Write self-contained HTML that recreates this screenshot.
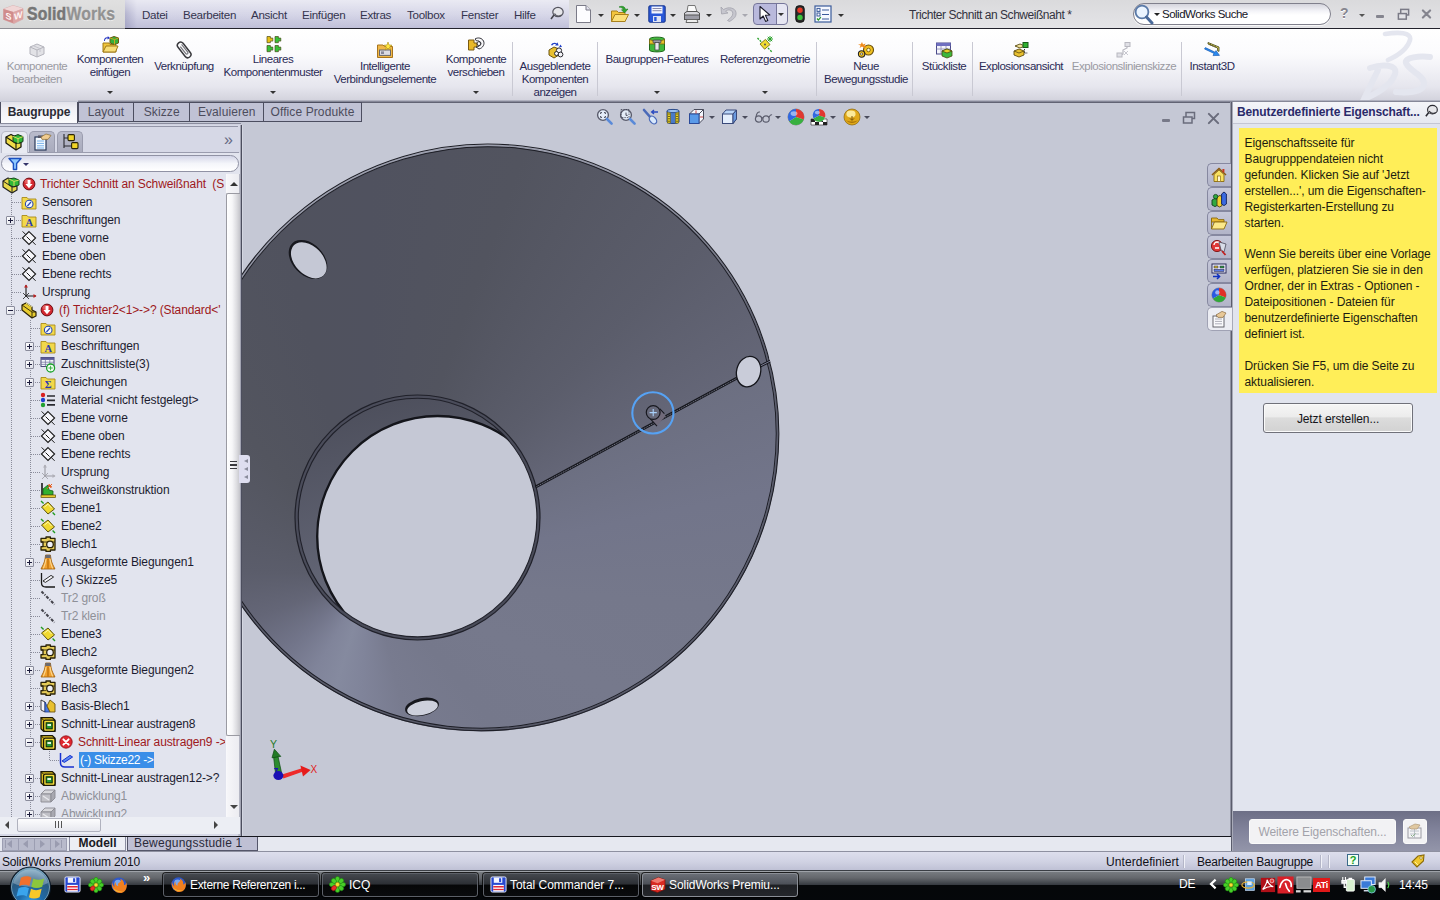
<!DOCTYPE html>
<html lang="de"><head><meta charset="utf-8"><title>SolidWorks Premium 2010 - Trichter Schnitt an Schweißnaht</title>
<style>
*{box-sizing:border-box;margin:0;padding:0}
html,body{width:1440px;height:900px;overflow:hidden;background:#c5c8d5}
body{font-family:"Liberation Sans","DejaVu Sans",sans-serif;font-size:12px;color:#1c1c30;position:relative}
.abs{position:absolute}
#page{position:absolute;left:0;top:0;width:1440px;height:900px;overflow:hidden}
/* title */
#title{left:0;top:0;width:1440px;height:28px;background:linear-gradient(#dadadc,#e0e0e3 60%,#e4e4e7)}
#titleline{left:0;top:28px;width:1440px;height:1px;background:linear-gradient(90deg,#8e8e94 0,#8e8e94 125px,#22222c 125px)}
#logo{left:0;top:0;width:125px;height:28px;background:linear-gradient(#e0e0e0,#d6d6d6)}
#menubar{left:125px;top:0;width:444px;height:28px;background:linear-gradient(90deg,#b0b0cc 0,#d3d3e6 12px,#d6d6e8 100%)}
#menubar:after{content:"";position:absolute;left:0;top:0;right:0;bottom:0;background:linear-gradient(rgba(255,255,255,.5),rgba(255,255,255,.05) 50%,rgba(110,110,160,.2))}
.mi{position:absolute;top:8px;font-size:11.6px;color:#34344e;white-space:nowrap;letter-spacing:-0.3px}
/* toolbar */
#cmd{left:0;top:29px;width:1440px;height:72px;background:linear-gradient(#ffffff 0,#fbfbfd 35%,#e6e6ee 80%,#d2d2dc 100%)}
.cb{position:absolute;text-align:center;font-size:11.5px;line-height:13px;color:#2a2a55;white-space:nowrap;letter-spacing:-0.46px}
.cb.dis{color:#9a9aa2}
.sep{position:absolute;top:42px;width:1px;height:54px;background:#c9c9d3}
.dd{position:absolute;width:0;height:0;border-left:3px solid transparent;border-right:3px solid transparent;border-top:3px solid #444}
/* tabs */
#tabrow{left:0;top:101px;width:1440px;height:24px;background:#c5c8d5}
</style></head><body><div id="page">
<!--TITLE-->
<div id="title" class="abs"></div><div id="logo" class="abs"></div><div id="menubar" class="abs"></div>
<svg class="abs" style="left:2px;top:4px" width="23" height="21" viewBox="0 0 23 21"><path d="M1.5 5 L11 1.5 L21 4.5 L21 15 L12 19.5 L1.5 15.5Z" fill="#e0b8b8" stroke="#d4a4a4" stroke-width=".6"/><path d="M1.5 5 L11.5 8 L21 4.5 L11 1.5Z" fill="#f0d6d6"/><path d="M1.5 5 L11.5 8 V19.2 L1.5 15.5Z" fill="#d08c8c"/><path d="M11.5 8 L21 4.5 V15 L11.5 19.2Z" fill="#dca4a4"/><text x="6.6" y="15.4" font-family="Liberation Sans,sans-serif" font-weight="bold" font-size="9" fill="#fff4f4" text-anchor="middle" transform="skewY(17)" style="transform-origin:6.6px 12px">S</text><text x="16.2" y="14.6" font-family="Liberation Sans,sans-serif" font-weight="bold" font-size="9" fill="#fff4f4" text-anchor="middle" transform="skewY(-20)" style="transform-origin:16.2px 12px">W</text></svg>
<div class="abs" style="left:27px;top:3.6px;font-size:18px;font-weight:bold;color:#767676;letter-spacing:0.2px;text-shadow:0 1px 0 #f0f0f0;white-space:nowrap;transform:scaleX(.875);transform-origin:0 0;-webkit-text-stroke:.5px #767676">Solid<span style="color:#929292;-webkit-text-stroke:.3px #929292">Works</span></div>
<div class="mi" style="left:142px">Datei</div>
<div class="mi" style="left:183px">Bearbeiten</div>
<div class="mi" style="left:251px">Ansicht</div>
<div class="mi" style="left:302px">Einfügen</div>
<div class="mi" style="left:360px">Extras</div>
<div class="mi" style="left:407px">Toolbox</div>
<div class="mi" style="left:461px">Fenster</div>
<div class="mi" style="left:514px">Hilfe</div>
<svg class="abs" style="left:549px;top:6px" width="16" height="16" viewBox="0 0 16 16"><ellipse cx="9" cy="6" rx="5.2" ry="4.6" fill="#e6e6ea" stroke="#55555f" stroke-width="1.2"/><path d="M5 9 L2 13" stroke="#44444c" stroke-width="1.6"/><path d="M5.5 7.5 C7 10 10 10.5 12.5 9" fill="none" stroke="#55555f" stroke-width="1.2"/></svg>
<svg class="abs" style="left:575px;top:4px" width="17" height="20" viewBox="0 0 17 20"><path d="M1.5 1.5 H11 L15.5 6 V18.5 H1.5Z" fill="#fdfdff" stroke="#7b7b88"/><path d="M11 1.5 V6 H15.5" fill="#e4e4ee" stroke="#7b7b88"/></svg>
<div class="dd" style="left:598px;top:14px;border-top-color:#333"></div>
<svg class="abs" style="left:610px;top:4px" width="20" height="20" viewBox="0 0 20 20"><path d="M1.5 7 H7 L8.5 8.5 H15 V17.5 H1.5Z" fill="#f3c53c" stroke="#a8801c"/><path d="M1.5 17.5 L5 10.5 H18.5 L15 17.5Z" fill="#fbe07a" stroke="#a8801c"/><path d="M9 3 C12 1.5 15 2.5 15.5 5.5 L18 5 L14.5 9 L11.5 5.8 L13.6 5.6 C13 4 11 3.4 9 3Z" fill="#2fa62f" stroke="#1a7a1a" stroke-width=".6"/></svg>
<div class="dd" style="left:634px;top:14px;border-top-color:#333"></div>
<svg class="abs" style="left:648px;top:5px" width="18" height="18" viewBox="0 0 18 18"><rect x=".8" y=".8" width="16.4" height="16.4" rx="1.2" fill="#2a58d8" stroke="#16348c"/><rect x="3.5" y="1.5" width="11" height="7" fill="#f4f6ff"/><rect x="4.5" y="3" width="9" height="1" fill="#88a"/><rect x="4.5" y="5.2" width="9" height="1" fill="#88a"/><rect x="5" y="11" width="8" height="6" fill="#dfe4f4"/><rect x="6.2" y="12" width="2.4" height="4" fill="#2a58d8"/></svg>
<div class="dd" style="left:670px;top:14px;border-top-color:#333"></div>
<svg class="abs" style="left:683px;top:4px" width="18" height="20" viewBox="0 0 18 20"><path d="M5 1.5 H12 L14 8 H4Z" fill="#fafafa" stroke="#777"/><path d="M1.5 9 L4 7.5 H14 L16.5 9 V14.5 H1.5Z" fill="#d6d6dc" stroke="#555"/><rect x="1.5" y="11" width="15" height="4.5" fill="#9c9ca6" stroke="#555"/><path d="M4 15.5 L3 18.5 H15 L14 15.5Z" fill="#eee" stroke="#666"/></svg>
<div class="dd" style="left:706px;top:14px;border-top-color:#333"></div>
<svg class="abs" style="left:719px;top:5px" width="19" height="18" viewBox="0 0 19 18"><path d="M2 2 L2.6 9 L9 8 L6.6 6.3 C9 4 13.5 4.5 13.8 8.2 C14 11 11.5 13 8.5 15.5 L10.5 16.5 C15 14 17.5 11.5 17 7.6 C16.4 2.6 9 1.4 4.6 4.6Z" fill="#c6c6ce" stroke="#a2a2ac" stroke-width=".8"/></svg>
<div class="dd" style="left:742px;top:14px;border-top-color:#a8a8b0"></div>
<div class="abs" style="left:753px;top:3px;width:35px;height:22px;border:1px solid #76769a;border-radius:4px;background:linear-gradient(90deg,#b9b9dc 0,#b9b9dc 22px,#76769a 22px,#76769a 23px,#e6e6f2 23px)"></div>
<svg class="abs" style="left:758px;top:5px" width="14" height="18" viewBox="0 0 14 18"><path d="M2 1.5 V14 L5.2 11 L7.6 16.4 L9.8 15.4 L7.4 10.2 L11.8 10Z" fill="#fff" stroke="#1a1a2a" stroke-width="1.1" stroke-linejoin="round"/></svg>
<div class="dd" style="left:778px;top:13px;border-top-color:#333"></div>
<svg class="abs" style="left:795px;top:5px" width="10" height="18" viewBox="0 0 10 18"><rect x=".8" y=".8" width="8.4" height="16.4" rx="3" fill="#2c2c2c" stroke="#111"/><circle cx="5" cy="5.2" r="2.7" fill="#e83a28"/><circle cx="5" cy="12.4" r="2.7" fill="#3cc43c"/></svg>
<svg class="abs" style="left:814px;top:5px" width="18" height="18" viewBox="0 0 18 18"><rect x="1" y="1" width="16" height="16" fill="#f6f8ff" stroke="#3a5a9a" stroke-width="1.2"/><rect x="3" y="3.4" width="3" height="3" fill="none" stroke="#3a5a9a"/><rect x="3" y="8" width="3" height="3" fill="none" stroke="#3a5a9a"/><path d="M3 13.5 l1.4 1.6 l2.4-3" stroke="#2a9a2a" fill="none" stroke-width="1.3"/><path d="M8 5 H15 M8 9.5 H15 M8 14 H15" stroke="#3a5a9a" stroke-width="1.2"/></svg>
<div class="dd" style="left:838px;top:14px;border-top-color:#333"></div>
<div class="abs" style="left:909px;top:8px;font-size:12px;color:#333340;white-space:nowrap;letter-spacing:-0.46px">Trichter Schnitt an Schweißnaht *</div>
<div class="abs" style="left:1133px;top:3px;width:198px;height:22px;border:1px solid #80808c;border-radius:11px;background:linear-gradient(#d4d4dc,#f4f4f8 35%,#ffffff 55%);box-shadow:0 1px 0 #f8f8f8"></div>
<svg class="abs" style="left:1133px;top:3px" width="22" height="22" viewBox="0 0 22 22"><circle cx="9" cy="9" r="6.4" fill="#eaf4ff" stroke="#5a7aa8" stroke-width="1.8"/><path d="M13.5 14 L19 20" stroke="#4a6a9a" stroke-width="3" stroke-linecap="round"/></svg>
<div class="dd" style="left:1154px;top:13px;border-top-color:#222"></div>
<div class="abs" style="left:1162px;top:8px;font-size:11.5px;color:#15151f;white-space:nowrap;letter-spacing:-0.5px">SolidWorks Suche</div>
<div class="abs" style="left:1340px;top:5px;font-size:14px;font-weight:bold;color:#85858f;text-shadow:0 1px 0 #fff">?</div>
<div class="dd" style="left:1359px;top:14px;border-top-color:#555"></div>
<div class="abs" style="left:1376px;top:15px;width:8px;height:3px;background:#85858f;border-radius:1px"></div>
<svg class="abs" style="left:1397px;top:8px" width="13" height="13" viewBox="0 0 14 14"><rect x="4" y="1.5" width="8.5" height="6" fill="none" stroke="#7a7a86" stroke-width="1.6"/><rect x="1.5" y="6" width="8.5" height="6" fill="#e4e4e8" stroke="#7a7a86" stroke-width="1.6"/></svg>
<svg class="abs" style="left:1421px;top:9px" width="11" height="10" viewBox="0 0 14 14"><path d="M2 2 L12 12 M12 2 L2 12" stroke="#85858f" stroke-width="3" stroke-linecap="round"/></svg>
<div id="titleline" class="abs"></div>
<!--/TITLE-->
<!--CMD-->
<div id="cmd" class="abs"></div>
<svg class="abs" style="left:1352px;top:30px" width="88" height="71" viewBox="1352 30 88 71"><g fill="none" stroke="#e4e6ef" stroke-linecap="round"><path d="M1385 34 C1398 32 1412 32 1410 40 C1407 50 1397 56 1388 60" stroke-width="4.6"/><path d="M1370 68 C1382 64 1398 64 1395 74 C1391 86 1376 94 1364 99 L1378 70" stroke-width="6"/><path d="M1430 57 C1420 56 1404 57 1406 63 C1410 72 1426 76 1424 85 C1422 92 1408 93 1396 92" stroke-width="6"/></g></svg>
<div class="cb dis" style="left:-43px;width:160px;top:60px">Komponente</div>
<div class="cb dis" style="left:-43px;width:160px;top:73px">bearbeiten</div>
<svg class="abs" style="left:28px;top:41px" width="18" height="18" viewBox="0 0 18 18"><path d="M2 6 L9 3 L16 6 V13 L9 16 L2 13Z" fill="#e2e2e6" stroke="#b4b4bc"/><path d="M2 6 L9 9 L16 6 M9 9 V16" fill="none" stroke="#b4b4bc"/><path d="M5 4.6 L12 7.6 V11" fill="none" stroke="#c4c4cc"/></svg>
<div class="cb" style="left:30px;width:160px;top:53px">Komponenten</div>
<div class="cb" style="left:30px;width:160px;top:66px">einfügen</div>
<div class="dd" style="left:107px;top:91px;border-top-color:#333"></div>
<svg class="abs" style="left:101px;top:35px" width="18" height="18" viewBox="0 0 18 18"><path d="M2 8 H8 L9 9.5 H15 V17 H2Z" fill="#f0c43a" stroke="#a07a18"/><path d="M2 17 L5 11 H17 L14.5 17Z" fill="#f8de78" stroke="#a07a18"/><path d="M9 3 L13 1.5 L17.5 3 V8 L13.5 9.5 L9 8Z" fill="#37b03a" stroke="#6a5a10"/><path d="M9 3 L13.5 4.6 L17.5 3 M13.5 4.6 V9.5" stroke="#c8a820" fill="none"/><path d="M3 6 C3 3 5 2 7 2.4 L6.6 1 L9 3 L6.4 4.6 L6.6 3.4 C5 3.2 4 4 4 6Z" fill="#2030c0"/></svg>
<div class="cb" style="left:104px;width:160px;top:60px">Verknüpfung</div>
<svg class="abs" style="left:175px;top:41px" width="18" height="18" viewBox="0 0 18 18"><g transform="rotate(-38 9 9)"><rect x="6" y="0" width="6.4" height="18" rx="3.2" fill="none" stroke="#3a3a3e" stroke-width="1.5"/><path d="M8.2 4 V13 a1.2 1.2 0 0 0 2.4 0 V3" fill="none" stroke="#77777d" stroke-width="1.2"/></g></svg>
<div class="cb" style="left:193px;width:160px;top:53px">Lineares</div>
<div class="cb" style="left:193px;width:160px;top:66px">Komponentenmuster</div>
<div class="dd" style="left:270px;top:91px;border-top-color:#333"></div>
<svg class="abs" style="left:264px;top:35px" width="18" height="18" viewBox="0 0 18 18"><g stroke="#4a4a18" stroke-width=".7"><path d="M3 1.5 h3.4 v1.6 h2.4 v3 h-2.4 v1.6 h-3.4z" fill="#e8c018"/><path d="M11 1.5 h3.4 v1.6 h2.4 v3 h-2.4 v1.6 h-3.4z" fill="#38c038"/><path d="M3 10.5 h3.4 v1.6 h2.4 v3 h-2.4 v1.6 h-3.4z" fill="#38c038"/><path d="M11 10.5 h3.4 v1.6 h2.4 v3 h-2.4 v1.6 h-3.4z" fill="#38c038"/></g></svg>
<div class="cb" style="left:305px;width:160px;top:60px">Intelligente</div>
<div class="cb" style="left:305px;width:160px;top:73px">Verbindungselemente</div>
<svg class="abs" style="left:376px;top:41px" width="18" height="18" viewBox="0 0 18 18"><path d="M1.5 4 H7 L8.5 5.5 H16.5 V16.5 H1.5Z" fill="#f0b848" stroke="#a8741c"/><rect x="3.5" y="9" width="11" height="5.4" fill="#dcdce4" stroke="#66666e"/><rect x="5" y="10.4" width="3" height="2.6" fill="#88889a"/><path d="M12 1 L13 4 L16 4.2 L13.6 6 L14.6 9 L12 7.2 L9.4 9 L10.4 6 L8 4.2 L11 4Z" fill="#ffe640" stroke="#a88a10" stroke-width=".6"/></svg>
<div class="cb" style="left:396px;width:160px;top:53px">Komponente</div>
<div class="cb" style="left:396px;width:160px;top:66px">verschieben</div>
<div class="dd" style="left:473px;top:91px;border-top-color:#333"></div>
<svg class="abs" style="left:467px;top:35px" width="18" height="18" viewBox="0 0 18 18"><path d="M1.5 5 H7 V8 H10 V12 H7 V15 H1.5Z" fill="#e8b828" stroke="#7a5a10"/><path d="M8 4 C11 2 15 3 16.5 6 C18 9 16 13 12 14 L9 12 C12 12 14 10 13.4 8 C13 6 11 5.4 9.6 6Z" fill="#f8f8fa" stroke="#33333a" stroke-width="1"/><circle cx="12" cy="8.6" r="2" fill="none" stroke="#33333a" stroke-width=".9"/></svg>
<div class="cb" style="left:475px;width:160px;top:60px">Ausgeblendete</div>
<div class="cb" style="left:475px;width:160px;top:73px">Komponenten</div>
<div class="cb" style="left:475px;width:160px;top:86px">anzeigen</div>
<svg class="abs" style="left:546px;top:41px" width="18" height="18" viewBox="0 0 18 18"><path d="M3 9 L8 6 L13 8 L13 14 L8 17 L3 14Z" fill="#e8c030" stroke="#6a5410"/><circle cx="13" cy="9.5" r="2.6" fill="#f4f4f8" stroke="#2a2a30"/><circle cx="14.5" cy="13.5" r="2.4" fill="#f4f4f8" stroke="#2a2a30"/><circle cx="10.5" cy="12.5" r="2" fill="#f4f4f8" stroke="#2a2a30"/><path d="M5 4 C6 1.6 9 1 11 2.4 L11.6 1.2 L12.6 4.6 L9 4.6 L10 3.4 C8.6 2.6 7 3 6.2 4.6Z" fill="#2040c8"/><path d="M14.5 3.5 l1.5 2.5 l-3 .2z" fill="#2040c8"/></svg>
<div class="cb" style="left:577px;width:160px;top:53px">Baugruppen-Features</div>
<div class="dd" style="left:654px;top:91px;border-top-color:#333"></div>
<svg class="abs" style="left:648px;top:35px" width="18" height="18" viewBox="0 0 18 18"><path d="M1.5 4 C1.5 1.5 16.5 1.5 16.5 4 V15 C16.5 17.5 1.5 17.5 1.5 15Z" fill="#42b83c" stroke="#1e6a1c"/><path d="M1.5 4 C1.5 6.4 16.5 6.4 16.5 4 V9 H1.5Z" fill="#e6c22a" stroke="#7a6410" stroke-width=".8"/><rect x="5" y="5" width="8" height="3" rx="1" fill="#9a9aa2" stroke="#3a3a40" stroke-width=".7"/><rect x="7" y="7.6" width="4" height="7.4" fill="#e8e8ee" stroke="#3a3a40" stroke-width=".7"/></svg>
<div class="cb" style="left:685px;width:160px;top:53px">Referenzgeometrie</div>
<div class="dd" style="left:762px;top:91px;border-top-color:#333"></div>
<svg class="abs" style="left:756px;top:35px" width="18" height="18" viewBox="0 0 18 18"><path d="M4 9 L9.5 4.4 L14 9.6 L8.6 14.2Z" fill="#f0dc30" stroke="#7a7210" stroke-width=".9"/><path d="M1.5 3 L5.4 7 M12 13 L16 17" stroke="#28a028" stroke-width="1.3" stroke-dasharray="2 1.2"/><path d="M14 1 V7 M11 4 H17 M11.8 1.8 L16.2 6.2 M16.2 1.8 L11.8 6.2" stroke="#28a028" stroke-width="1"/><circle cx="9" cy="9.4" r="1" fill="#555"/></svg>
<div class="cb" style="left:786px;width:160px;top:60px">Neue</div>
<div class="cb" style="left:786px;width:160px;top:73px">Bewegungsstudie</div>
<svg class="abs" style="left:857px;top:41px" width="18" height="18" viewBox="0 0 18 18"><circle cx="11.5" cy="9" r="5" fill="#f0c020" stroke="#6a4e08" stroke-width="1.1"/><circle cx="11.5" cy="9" r="1.8" fill="#fff8d0" stroke="#6a4e08" stroke-width=".8"/><circle cx="4.6" cy="13" r="3.2" fill="#f0c020" stroke="#222" stroke-width="1.1"/><circle cx="4.6" cy="13" r="1.1" fill="#fff" stroke="#222" stroke-width=".6"/><path d="M5 1 L6 3.6 L8.6 2.4 L7.4 5 L10 6 L7.4 7 L5 5.4 L2.6 7 L3.6 4.4 L1 3.4 L3.8 3.2Z" fill="#f08a1a"/></svg>
<div class="cb" style="left:864px;width:160px;top:60px">Stückliste</div>
<svg class="abs" style="left:935px;top:41px" width="18" height="18" viewBox="0 0 18 18"><rect x="1.5" y="2" width="14" height="11" fill="#f4f4fa" stroke="#4a4a8a"/><rect x="1.5" y="2" width="14" height="3" fill="#7070c0"/><path d="M1.5 8 H15.5 M6 5 V13 M11 5 V13" stroke="#8a8ab0" stroke-width=".8"/><path d="M7 10 L12 8 L17 10 V15 L12 17 L7 15Z" fill="#3cb83c" stroke="#4a4a10" stroke-width=".8"/><path d="M7 10 L12 12 L17 10 L12 8Z" fill="#e8d028" stroke="#4a4a10" stroke-width=".8"/></svg>
<div class="cb" style="left:941px;width:160px;top:60px">Explosionsansicht</div>
<svg class="abs" style="left:1012px;top:41px" width="18" height="18" viewBox="0 0 18 18"><path d="M2 10 L7 8 L12 10 V14 L7 16 L2 14Z" fill="#e8c030" stroke="#5a4a10" stroke-width=".9"/><path d="M2 10 L7 12 L12 10" fill="none" stroke="#5a4a10" stroke-width=".8"/><path d="M3 5 L8 3 L13 5 L8 7Z" fill="#f4e6a0" stroke="#5a4a10" stroke-width=".9"/><rect x="11" y="1.5" width="5" height="5" fill="#30b030" stroke="#185a18"/><path d="M12.5 8 V12 H16" stroke="#333" fill="none" stroke-dasharray="1.4 1"/></svg>
<div class="cb dis" style="left:1044px;width:160px;top:60px">Explosionslinienskizze</div>
<svg class="abs" style="left:1115px;top:41px" width="18" height="18" viewBox="0 0 18 18"><path d="M3 15 L8 13 L8 9 L12 7 L12 3" fill="none" stroke="#b8b8c0" stroke-width="1.2"/><rect x="10" y="1.5" width="5" height="4" fill="#e0e0e6" stroke="#b8b8c0"/><rect x="2" y="12" width="5" height="4" fill="#e0e0e6" stroke="#b8b8c0"/><path d="M9 10 l4 4 m0-4 l-4 4" stroke="#c8c8d0"/></svg>
<div class="cb" style="left:1132px;width:160px;top:60px">Instant3D</div>
<svg class="abs" style="left:1203px;top:41px" width="18" height="18" viewBox="0 0 18 18"><path d="M5 1.5 L16 6 L16 10.4 L14.6 9.8 L14.6 7 L5 3Z" fill="#f4e860" stroke="#3a3a10" stroke-width=".8"/><path d="M7.4 3 v1.4 M9.8 4 v1.4 M12.2 5 v1.4" stroke="#3a3a10" stroke-width=".7"/><path d="M1.5 8 L11 12.4 L10 14.6 L16.5 14.4 L13 9.6 L12.2 11.2 L2.4 6.6Z" fill="#2a8af0" stroke="#1050a8" stroke-width=".6"/></svg>
<div class="sep" style="left:512px"></div>
<div class="sep" style="left:597px"></div>
<div class="sep" style="left:816px"></div>
<div class="sep" style="left:912px"></div>
<div class="sep" style="left:972px"></div>
<div class="sep" style="left:1181px"></div>
<!--/CMD-->
<!--VIEW-->
<div class="abs" style="left:242px;top:102px;width:989px;height:734px;background:#c5c8d5;overflow:hidden"><div class="abs" style="left:0;top:23px;width:1px;height:711px;background:#d3d6e1"></div>
<div class="abs" style="left:-53.0px;top:43.5px;width:591.2px;height:583.8px;border-radius:50%;transform:rotate(-38deg);overflow:hidden"><div class="abs" style="left:-24.4px;top:-28.1px;width:640px;height:640px;transform:rotate(38deg);background:linear-gradient(165deg,#a0a3b2 10%,#8c8f9e 28%,#5e606f 46%,#555766 100%)"></div></div>
<div class="abs" style="left:-50.4px;top:46.1px;width:586.0px;height:578.6px;border-radius:50%;transform:rotate(-38deg);overflow:hidden"><div class="abs" style="left:-27.0px;top:-30.7px;width:640px;height:640px;transform:rotate(38deg);background:conic-gradient(from 0deg at 204.9px 458.6px,#50525f 0deg,#52545f 20deg,#5b5d6b 45deg,#646677 61.4deg,#6c6f81 61.6deg,#72758a 78deg,#75788b 95deg,#76798c 115deg,#75788b 140deg,#787b8f 166deg,#80849a 184deg,#858a9f 197deg,#80849a 210deg,#72758a 228deg,#646677 250deg,#5b5d6b 272deg,#53555f 319deg,#50525e 346deg,#50525f 360deg)"></div></div>
</div>
<svg class="abs" style="left:242px;top:102px" width="989" height="734" viewBox="242 102 989 734">
<defs>
<linearGradient id="gneck" gradientUnits="userSpaceOnUse" x1="300" y1="420" x2="360" y2="640"><stop offset="0" stop-color="#4d4f5c"/><stop offset="1" stop-color="#6a6d7e"/></linearGradient>
</defs>
<ellipse cx="484.6" cy="437.4" rx="295.6" ry="291.9" transform="rotate(-38 484.6 437.4)" fill="none" stroke="#1d1e26" stroke-width="1.1"/>
<ellipse cx="484.6" cy="437.4" rx="293" ry="289.3" transform="rotate(-38 484.6 437.4)" fill="none" stroke="#1d1e26" stroke-width="1"/>
<circle cx="417.5" cy="517.5" r="122.5" fill="#4a4c5a" stroke="#20212a" stroke-width="1.2"/>
<circle cx="417.6" cy="517.6" r="119.3" fill="url(#gneck)"/>
<clipPath id="cnear"><circle cx="417.6" cy="517.6" r="119.3"/></clipPath>
<circle cx="437.6" cy="536.4" r="120.4" fill="#c5c8d5" stroke="#14151b" stroke-width="2.4" clip-path="url(#cnear)"/>
<circle cx="417.6" cy="517.6" r="119.3" fill="none" stroke="#20212a" stroke-width="1.1"/>
<path d="M535.5 487 L737 378" stroke="#15161c" stroke-width="3.1"/>
<path d="M536.5 486.6 L737 378.2" stroke="#7c7f92" stroke-width=".9" stroke-dasharray="1.2 .8"/>
<path d="M759.5 366.4 L770.5 361" stroke="#15161c" stroke-width="2.8"/><path d="M760 366.2 L770 361.2" stroke="#8588a0" stroke-width=".9"/>
<path d="M770 358 L772 364" stroke="#c5c8d5" stroke-width="1.6"/>
<ellipse cx="308" cy="259.5" rx="22.6" ry="15.6" transform="rotate(46 308 259.5)" fill="#17181e"/>
<ellipse cx="308.8" cy="260.3" rx="21.2" ry="14" transform="rotate(46 308.8 260.3)" fill="#c5c8d5"/>
<ellipse cx="748.6" cy="371.6" rx="12" ry="15.4" transform="rotate(14 748.6 371.6)" fill="#c9ccd9" stroke="#15161c" stroke-width="1.3"/>
<ellipse cx="422" cy="706.9" rx="17.2" ry="8.9" transform="rotate(-12 422 706.9)" fill="#17181e"/>
<ellipse cx="422.5" cy="708" rx="15.6" ry="7" transform="rotate(-12 422.5 708)" fill="#cdd0dc"/>
<path d="M650.6 418.6 L657 426 L665.6 416 L659.4 408.6Z" fill="#706a7a"/>
<path d="M650.4 418.8 L657 426.2 M659.6 408.6 L664.4 413.6" stroke="#17181f" stroke-width="1.1" fill="none"/>
<circle cx="652.9" cy="412.9" r="20.6" fill="none" stroke="#56a2f4" stroke-width="2.1"/>
<circle cx="653.2" cy="412.5" r="6.9" fill="#666879" stroke="#17181f" stroke-width="1.2"/>
<path d="M649.6 412.6 H656.8 M653.2 409 V416.2" stroke="#a8d0fa" stroke-width="1.1"/>
<g><path d="M282 774.4 L302 768.2 L303.2 771.6 L283.4 778.6Z" fill="#ee2a2a"/><path d="M300.4 765.4 L310.6 770 L303 776.6Z" fill="#e61c1c"/><path d="M275.6 774 L273.6 757 L278 756.4 L281.6 773Z" fill="#2c8c2e" stroke="#0c4a10" stroke-width=".7"/><path d="M272 757.8 L274.4 749.2 L280.8 756.4Z" fill="#237a26" stroke="#0c4a10" stroke-width=".7"/><ellipse cx="278.4" cy="775.6" rx="5" ry="4.5" fill="#1a10b4"/><path d="M274.2 768.6 H277.4 L276 772" stroke="#1a10b4" stroke-width="1.2" fill="none"/><text x="310.6" y="773" font-family="Liberation Sans,sans-serif" font-size="10" fill="#e02020">X</text><text x="270" y="748" font-family="Liberation Sans,sans-serif" font-size="10.5" fill="#1f7a28">Y</text></g>
</svg>
<!--/VIEW-->
<!--TABS-->
<div class="abs" style="left:78px;top:100px;width:1362px;height:3px;background:linear-gradient(#c4c5d2,#8e90a0 45%,#5c5e6e 75%,#6e7080)"></div>
<div class="abs" style="left:78px;top:103px;width:1153px;height:21px;background:#c5c8d5"></div>
<div class="abs" style="left:0;top:101.5px;width:78px;height:22px;background:linear-gradient(#e2e2ea,#f0f0f5 30%,#fbfbfd);border-right:1.5px solid #4c4e60;border-bottom:1.5px solid #4c4e60;border-left:1.5px solid #4c4e60"></div>
<div class="abs" style="left:0px;top:105px;width:78px;text-align:center;font-size:12px;font-weight:bold;color:#2a2a34;letter-spacing:-0.1px">Baugruppe</div>
<div class="abs" style="left:77.5px;top:101.5px;width:57.0px;height:20.5px;background:#c0c2d5;border:1.5px solid #4c4e60"></div>
<div class="abs" style="left:77.5px;top:105px;width:57.0px;text-align:center;font-size:12px;color:#4c4c5c;white-space:nowrap;letter-spacing:0.1px">Layout</div>
<div class="abs" style="left:133px;top:101.5px;width:57.5px;height:20.5px;background:#c0c2d5;border:1.5px solid #4c4e60"></div>
<div class="abs" style="left:133px;top:105px;width:57.5px;text-align:center;font-size:12px;color:#4c4c5c;white-space:nowrap;letter-spacing:0.1px">Skizze</div>
<div class="abs" style="left:189px;top:101.5px;width:75.5px;height:20.5px;background:#c0c2d5;border:1.5px solid #4c4e60"></div>
<div class="abs" style="left:189px;top:105px;width:75.5px;text-align:center;font-size:12px;color:#4c4c5c;white-space:nowrap;letter-spacing:0.1px">Evaluieren</div>
<div class="abs" style="left:263px;top:101.5px;width:99px;height:20.5px;background:#c0c2d5;border:1.5px solid #4c4e60"></div>
<div class="abs" style="left:263px;top:105px;width:99px;text-align:center;font-size:12px;color:#4c4c5c;white-space:nowrap;letter-spacing:0.1px">Office Produkte</div>
<!--/TABS-->
<!--LEFT-->
<div class="abs" style="left:0;top:123px;width:241px;height:1px;background:#8a8c9e"></div><div class="abs" style="left:0;top:124px;width:241px;height:1px;background:#d0d2e0"></div>
<div class="abs" style="left:0;top:125px;width:240px;height:711px;background:#d6d8e6"></div><div class="abs" style="left:238px;top:153px;width:3px;height:683px;background:linear-gradient(90deg,#c4c6d2,#a6a8b6)"></div>
<div class="abs" style="left:0;top:126px;width:238px;height:1px;background:#9496a8"></div>
<div class="abs" style="left:240px;top:125px;width:1px;height:711px;background:#a2a4b2"></div><div class="abs" style="left:241px;top:125px;width:1px;height:711px;background:#4c4e5e"></div>
<div class="abs" style="left:1px;top:131px;width:27px;height:22px;background:#e8eaf2;border:1px solid #b8bac8;border-bottom:none;border-radius:5px 5px 0 0"></div>
<div class="abs" style="left:29px;top:131px;width:26px;height:21px;background:linear-gradient(#b9bbcb,#a9abbd);border:1px solid #9a9cae;border-bottom:none;border-radius:5px 5px 0 0"></div>
<div class="abs" style="left:57px;top:131px;width:26px;height:21px;background:linear-gradient(#b9bbcb,#a9abbd);border:1px solid #9a9cae;border-bottom:none;border-radius:5px 5px 0 0"></div>
<div class="abs" style="left:28px;top:152px;width:211px;height:1px;background:#9a9cae"></div>
<div class="abs" style="left:0;top:153px;width:240px;height:21px;background:#e2e4ee"></div>
<div class="abs" style="left:224px;top:131px;font-size:16px;color:#666a84;letter-spacing:-2px;line-height:18px">»</div>
<div class="abs" style="left:1px;top:155px;width:238px;height:17px;border:1px solid #9092a4;border-radius:9px;background:linear-gradient(#d4d6e8,#f4f5fa 50%,#ffffff)"></div>
<svg class="abs" style="left:8px;top:157px" width="14" height="14" viewBox="0 0 14 14"><path d="M1 1.5 H13 L8.6 6.5 V12.5 H5.4 V6.5Z" fill="#8ec8ff" stroke="#1a50c0" stroke-width="1.4" stroke-linejoin="round"/></svg>
<div class="dd" style="left:23px;top:163px;border-top-color:#34346a"></div>
<div class="abs" style="left:0;top:174px;width:227px;height:643px;background:#e2e4ee"></div>
<div class="abs" style="left:226px;top:174px;width:13px;height:643px;background:linear-gradient(90deg,#f6f6f9,#ececf1);border-left:1px solid #f8f8fb"></div>
<div class="abs" style="left:226px;top:193px;width:14px;height:542.5px;background:linear-gradient(90deg,#ffffff 0,#f6f6f8 40%,#dcdce0 75%,#c4c4ca 100%);border:1px solid #9a9aa2;border-right:none;border-radius:2px 0 0 2px"></div>
<div class="abs" style="left:230px;top:182px;width:0;height:0;border-left:4px solid transparent;border-right:4px solid transparent;border-bottom:4px solid #333"></div>
<div class="abs" style="left:230px;top:805px;width:0;height:0;border-left:4px solid transparent;border-right:4px solid transparent;border-top:4px solid #444"></div>
<div class="abs" style="left:0;top:817px;width:240px;height:17px;background:#eceef4"></div>
<div class="abs" style="left:17px;top:818px;width:84px;height:14px;background:linear-gradient(#fdfdfe,#e6e7ee);border:1px solid #b0b2be;border-radius:2px"></div>
<div class="abs" style="left:55px;top:821px;width:7px;height:7px;background:repeating-linear-gradient(90deg,#555 0,#555 1px,transparent 1px,transparent 3px)"></div>
<div class="abs" style="left:5px;top:821px;width:0;height:0;border-top:4px solid transparent;border-bottom:4px solid transparent;border-right:4px solid #444"></div>
<div class="abs" style="left:214px;top:821px;width:0;height:0;border-top:4px solid transparent;border-bottom:4px solid transparent;border-left:4px solid #444"></div>
<svg class="abs" style="left:5px;top:133px" width="20" height="18" viewBox="0 0 20 18"><path d="M1 4 L6 1.5 L11 4 L11 7 L16 9.4 V14 L11 17 L1 10Z" fill="#f0dc48" stroke="#1a1a10" stroke-width="1.3" stroke-linejoin="round"/><path d="M1 4 L11 10.6 V17 M11 10.6 L16 9.4" stroke="#1a1a10" fill="none" stroke-width="1.1"/><path d="M8 3.4 L13 1.6 L18 3.6 V8.6 L13 10.6 L8 8.6Z" fill="#30b838" stroke="#143a14" stroke-width="1"/><path d="M8 3.4 L13 5.6 L18 3.6 M13 5.6 V10.6" stroke="#e8e060" fill="none" stroke-width=".9"/></svg>
<svg class="abs" style="left:33px;top:133px" width="20" height="18" viewBox="0 0 20 18"><rect x="2" y="4" width="11" height="13" fill="#f4faff" stroke="#2a3a5a" stroke-width="1.2"/><path d="M4 8 H11 M4 10.4 H11 M4 12.8 H11 M4 15 H11" stroke="#6aa8e8" stroke-width=".9"/><rect x="5" y="2.4" width="5" height="2.6" fill="#5a5a6a"/><path d="M8 4 L13 1 L18 2.4 L15 6.4 L9 6.4Z" fill="#f0cc90" stroke="#8a6a30" stroke-width=".7"/></svg>
<svg class="abs" style="left:61px;top:133px" width="20" height="18" viewBox="0 0 20 18"><path d="M3 1 V15 M3 5 H8 M3 13 H11" stroke="#2a2a30" stroke-width="1.1" fill="none"/><rect x="7" y="1.6" width="6.4" height="6" rx="1" fill="#f0d428" stroke="#2a2408" stroke-width="1.1"/><rect x="10.6" y="9.6" width="6.4" height="6" rx="1" fill="#f0d428" stroke="#2a2408" stroke-width="1.1"/></svg>
<!--/LEFT-->
<!--TREE-->
<div class="abs" id="tree" style="left:0;top:174px;width:225px;height:643px;overflow:hidden">
<div class="abs" style="left:11px;top:19px;width:1px;height:630px;background:repeating-linear-gradient(0deg,#8a8c9a 0,#8a8c9a 1px,transparent 1px,transparent 2px)"></div>
<div class="abs" style="left:30px;top:145px;width:1px;height:500px;background:repeating-linear-gradient(0deg,#8a8c9a 0,#8a8c9a 1px,transparent 1px,transparent 2px)"></div>
<div class="abs" style="left:49px;top:577px;width:1px;height:9px;background:repeating-linear-gradient(0deg,#8a8c9a 0,#8a8c9a 1px,transparent 1px,transparent 2px)"></div>
<svg class="abs" style="left:2px;top:2px" width="18" height="16" viewBox="0 0 18 16" overflow="visible"><path d="M1 5 L6 2 L11 4 L11 8 L15 10 V14 L10 17 L1 11Z" fill="#e8d84a" stroke="#222" stroke-width="1.2" stroke-linejoin="round"/><path d="M7 3 L12 2 L17 4 V9 L12 11 L7 9Z" fill="#30b838" stroke="#1a4a1a" stroke-width="1"/><path d="M7 3 L12 5.4 L17 4 M12 5.4 V11" stroke="#e8e060" fill="none" stroke-width=".9"/><path d="M1 5 L10 11 V17 M10 11 L15 10" stroke="#222" fill="none" stroke-width="1"/></svg>
<svg class="abs" style="left:22px;top:2px" width="16" height="16" viewBox="0 0 16 16" overflow="visible"><circle cx="7" cy="8" r="5.9" fill="#d42830" stroke="#6e0c12" stroke-width="1"/><ellipse cx="6" cy="5.4" rx="3.4" ry="2.4" fill="#f08080" opacity=".6"/><path d="M5.6 4 H8.4 V8 H10.6 L7 12.2 L3.4 8 H5.6Z" fill="#fff"/></svg>
<div class="abs" style="left:40px;top:2px;line-height:16px;height:16px;white-space:nowrap;font-size:12px;letter-spacing:-0.12px;color:#9e1820;">Trichter Schnitt an Schweißnaht&nbsp; (S</div>
<div class="abs" style="left:12px;top:28px;width:9px;height:1px;background:repeating-linear-gradient(90deg,#8a8c9a 0,#8a8c9a 1px,transparent 1px,transparent 2px)"></div>
<svg class="abs" style="left:21px;top:20px" width="16" height="16" viewBox="0 0 16 16" overflow="visible"><path d="M1 3.5 H6 L7.4 5 H15 V15 H1Z" fill="#f2d84a" stroke="#a88a18" stroke-width=".9"/><circle cx="8.2" cy="10" r="3.8" fill="#f4f8ff" stroke="#2a4ab0" stroke-width="1.1"/><path d="M6.4 12 L10 8" stroke="#2a4ab0" stroke-width="1.2"/></svg>
<div class="abs" style="left:42px;top:20px;line-height:16px;height:16px;white-space:nowrap;font-size:12px;letter-spacing:-0.12px;">Sensoren</div>
<div class="abs" style="left:12px;top:46px;width:9px;height:1px;background:repeating-linear-gradient(90deg,#8a8c9a 0,#8a8c9a 1px,transparent 1px,transparent 2px)"></div>
<div class="abs" style="left:6px;top:42px;width:9px;height:9px;border:1px solid #8a8c9c;background:linear-gradient(135deg,#fff,#dcdee8);border-radius:1px"></div><div class="abs" style="left:8px;top:46px;width:5px;height:1px;background:#1a1a3a"></div><div class="abs" style="left:10px;top:44px;width:1px;height:5px;background:#1a1a3a"></div>
<svg class="abs" style="left:21px;top:38px" width="16" height="16" viewBox="0 0 16 16" overflow="visible"><path d="M1 3.5 H6 L7.4 5 H15 V15 H1Z" fill="#f2d84a" stroke="#a88a18" stroke-width=".9"/><text x="8.2" y="14" font-family="Liberation Serif,serif" font-weight="bold" font-size="10.5" fill="#2a3ab0" text-anchor="middle">A</text></svg>
<div class="abs" style="left:42px;top:38px;line-height:16px;height:16px;white-space:nowrap;font-size:12px;letter-spacing:-0.12px;">Beschriftungen</div>
<div class="abs" style="left:12px;top:64px;width:9px;height:1px;background:repeating-linear-gradient(90deg,#8a8c9a 0,#8a8c9a 1px,transparent 1px,transparent 2px)"></div>
<svg class="abs" style="left:21px;top:56px" width="16" height="16" viewBox="0 0 16 16" overflow="visible"><path d="M8 1.6 L14.6 8 L8 14.4 L1.4 8Z" fill="#f6f6fa" stroke="#1a1a1a" stroke-width="1.1"/><path d="M1.6 1.4 L5 4.8 M11 11.2 L14.6 14.8 M5.6 6.6 L9.6 10.6" stroke="#1a1a1a" stroke-width="1"/></svg>
<div class="abs" style="left:42px;top:56px;line-height:16px;height:16px;white-space:nowrap;font-size:12px;letter-spacing:-0.12px;">Ebene vorne</div>
<div class="abs" style="left:12px;top:82px;width:9px;height:1px;background:repeating-linear-gradient(90deg,#8a8c9a 0,#8a8c9a 1px,transparent 1px,transparent 2px)"></div>
<svg class="abs" style="left:21px;top:74px" width="16" height="16" viewBox="0 0 16 16" overflow="visible"><path d="M8 1.6 L14.6 8 L8 14.4 L1.4 8Z" fill="#f6f6fa" stroke="#1a1a1a" stroke-width="1.1"/><path d="M1.6 1.4 L5 4.8 M11 11.2 L14.6 14.8 M5.6 6.6 L9.6 10.6" stroke="#1a1a1a" stroke-width="1"/></svg>
<div class="abs" style="left:42px;top:74px;line-height:16px;height:16px;white-space:nowrap;font-size:12px;letter-spacing:-0.12px;">Ebene oben</div>
<div class="abs" style="left:12px;top:100px;width:9px;height:1px;background:repeating-linear-gradient(90deg,#8a8c9a 0,#8a8c9a 1px,transparent 1px,transparent 2px)"></div>
<svg class="abs" style="left:21px;top:92px" width="16" height="16" viewBox="0 0 16 16" overflow="visible"><path d="M8 1.6 L14.6 8 L8 14.4 L1.4 8Z" fill="#f6f6fa" stroke="#1a1a1a" stroke-width="1.1"/><path d="M1.6 1.4 L5 4.8 M11 11.2 L14.6 14.8 M5.6 6.6 L9.6 10.6" stroke="#1a1a1a" stroke-width="1"/></svg>
<div class="abs" style="left:42px;top:92px;line-height:16px;height:16px;white-space:nowrap;font-size:12px;letter-spacing:-0.12px;">Ebene rechts</div>
<div class="abs" style="left:12px;top:118px;width:9px;height:1px;background:repeating-linear-gradient(90deg,#8a8c9a 0,#8a8c9a 1px,transparent 1px,transparent 2px)"></div>
<svg class="abs" style="left:21px;top:110px" width="16" height="16" viewBox="0 0 16 16" overflow="visible"><path d="M5 1 V12 H15" fill="none" stroke="#1a1a1a" stroke-width="1.1"/><path d="M5 0.5 l-2 3 h4z M15.5 12 l-3-2 v4z" fill="#c02020"/><path d="M2 9 l6 6 M8 9 l-6 6" stroke="#1a1a1a" stroke-width=".8"/></svg>
<div class="abs" style="left:42px;top:110px;line-height:16px;height:16px;white-space:nowrap;font-size:12px;letter-spacing:-0.12px;">Ursprung</div>
<div class="abs" style="left:12px;top:136px;width:9px;height:1px;background:repeating-linear-gradient(90deg,#8a8c9a 0,#8a8c9a 1px,transparent 1px,transparent 2px)"></div>
<div class="abs" style="left:6px;top:132px;width:9px;height:9px;border:1px solid #8a8c9c;background:linear-gradient(135deg,#fff,#dcdee8);border-radius:1px"></div><div class="abs" style="left:8px;top:136px;width:5px;height:1px;background:#1a1a3a"></div>
<svg class="abs" style="left:21px;top:128px" width="16" height="16" viewBox="0 0 16 16" overflow="visible"><path d="M1 3 L5 1 L11 5 L11 8 L15 10 V14 L11 16 L1 8Z" fill="#e8cc30" stroke="#2a2208" stroke-width="1.2" stroke-linejoin="round"/><path d="M1 3 L11 10 V16 M11 10 L15 10" fill="none" stroke="#2a2208" stroke-width=".9"/><path d="M5 1 L11 5" stroke="#fff4a0"/></svg>
<svg class="abs" style="left:40px;top:128px" width="16" height="16" viewBox="0 0 16 16" overflow="visible"><circle cx="7" cy="8" r="5.9" fill="#d42830" stroke="#6e0c12" stroke-width="1"/><ellipse cx="6" cy="5.4" rx="3.4" ry="2.4" fill="#f08080" opacity=".6"/><path d="M5.6 4 H8.4 V8 H10.6 L7 12.2 L3.4 8 H5.6Z" fill="#fff"/></svg>
<div class="abs" style="left:59px;top:128px;line-height:16px;height:16px;white-space:nowrap;font-size:12px;letter-spacing:-0.12px;color:#9e1820;">(f) Trichter2&lt;1&gt;-&gt;? (Standard&lt;'</div>
<div class="abs" style="left:31px;top:154px;width:9px;height:1px;background:repeating-linear-gradient(90deg,#8a8c9a 0,#8a8c9a 1px,transparent 1px,transparent 2px)"></div>
<svg class="abs" style="left:40px;top:146px" width="16" height="16" viewBox="0 0 16 16" overflow="visible"><path d="M1 3.5 H6 L7.4 5 H15 V15 H1Z" fill="#f2d84a" stroke="#a88a18" stroke-width=".9"/><circle cx="8.2" cy="10" r="3.8" fill="#f4f8ff" stroke="#2a4ab0" stroke-width="1.1"/><path d="M6.4 12 L10 8" stroke="#2a4ab0" stroke-width="1.2"/></svg>
<div class="abs" style="left:61px;top:146px;line-height:16px;height:16px;white-space:nowrap;font-size:12px;letter-spacing:-0.12px;">Sensoren</div>
<div class="abs" style="left:31px;top:172px;width:9px;height:1px;background:repeating-linear-gradient(90deg,#8a8c9a 0,#8a8c9a 1px,transparent 1px,transparent 2px)"></div>
<div class="abs" style="left:25px;top:168px;width:9px;height:9px;border:1px solid #8a8c9c;background:linear-gradient(135deg,#fff,#dcdee8);border-radius:1px"></div><div class="abs" style="left:27px;top:172px;width:5px;height:1px;background:#1a1a3a"></div><div class="abs" style="left:29px;top:170px;width:1px;height:5px;background:#1a1a3a"></div>
<svg class="abs" style="left:40px;top:164px" width="16" height="16" viewBox="0 0 16 16" overflow="visible"><path d="M1 3.5 H6 L7.4 5 H15 V15 H1Z" fill="#f2d84a" stroke="#a88a18" stroke-width=".9"/><text x="8.2" y="14" font-family="Liberation Serif,serif" font-weight="bold" font-size="10.5" fill="#2a3ab0" text-anchor="middle">A</text></svg>
<div class="abs" style="left:61px;top:164px;line-height:16px;height:16px;white-space:nowrap;font-size:12px;letter-spacing:-0.12px;">Beschriftungen</div>
<div class="abs" style="left:31px;top:190px;width:9px;height:1px;background:repeating-linear-gradient(90deg,#8a8c9a 0,#8a8c9a 1px,transparent 1px,transparent 2px)"></div>
<div class="abs" style="left:25px;top:186px;width:9px;height:9px;border:1px solid #8a8c9c;background:linear-gradient(135deg,#fff,#dcdee8);border-radius:1px"></div><div class="abs" style="left:27px;top:190px;width:5px;height:1px;background:#1a1a3a"></div><div class="abs" style="left:29px;top:188px;width:1px;height:5px;background:#1a1a3a"></div>
<svg class="abs" style="left:40px;top:182px" width="16" height="16" viewBox="0 0 16 16" overflow="visible"><rect x="1" y="1.5" width="13" height="9" fill="#f4f6fc" stroke="#3a3a6a" stroke-width=".9"/><rect x="1" y="1.5" width="13" height="2.4" fill="#5a5a9a"/><path d="M1 6.2 H14 M1 8.4 H14 M5.4 3.9 V10.5 M9.8 3.9 V10.5" stroke="#6a6a9a" stroke-width=".7"/><circle cx="10.6" cy="12" r="4" fill="#f4fff4" stroke="#18a028" stroke-width="1.3"/><path d="M8.4 12 H12.8 M10.6 9.8 V14.2" stroke="#18a028" stroke-width=".8"/></svg>
<div class="abs" style="left:61px;top:182px;line-height:16px;height:16px;white-space:nowrap;font-size:12px;letter-spacing:-0.12px;">Zuschnittsliste(3)</div>
<div class="abs" style="left:31px;top:208px;width:9px;height:1px;background:repeating-linear-gradient(90deg,#8a8c9a 0,#8a8c9a 1px,transparent 1px,transparent 2px)"></div>
<div class="abs" style="left:25px;top:204px;width:9px;height:9px;border:1px solid #8a8c9c;background:linear-gradient(135deg,#fff,#dcdee8);border-radius:1px"></div><div class="abs" style="left:27px;top:208px;width:5px;height:1px;background:#1a1a3a"></div><div class="abs" style="left:29px;top:206px;width:1px;height:5px;background:#1a1a3a"></div>
<svg class="abs" style="left:40px;top:200px" width="16" height="16" viewBox="0 0 16 16" overflow="visible"><path d="M1 3.5 H6 L7.4 5 H15 V15 H1Z" fill="#f2d84a" stroke="#a88a18" stroke-width=".9"/><text x="8.2" y="14" font-family="Liberation Serif,serif" font-weight="bold" font-size="10.5" fill="#2a3ab0" text-anchor="middle">Σ</text></svg>
<div class="abs" style="left:61px;top:200px;line-height:16px;height:16px;white-space:nowrap;font-size:12px;letter-spacing:-0.12px;">Gleichungen</div>
<div class="abs" style="left:31px;top:226px;width:9px;height:1px;background:repeating-linear-gradient(90deg,#8a8c9a 0,#8a8c9a 1px,transparent 1px,transparent 2px)"></div>
<svg class="abs" style="left:40px;top:218px" width="16" height="16" viewBox="0 0 16 16" overflow="visible"><circle cx="3" cy="3" r="2.2" fill="#d82020"/><circle cx="3" cy="8" r="2.2" fill="#2040d0"/><circle cx="3" cy="13" r="2.2" fill="#20a030"/><path d="M7 4 H15 M7 8.4 H15 M7 12.8 H15" stroke="#2a2a30" stroke-width="1.7"/></svg>
<div class="abs" style="left:61px;top:218px;line-height:16px;height:16px;white-space:nowrap;font-size:12px;letter-spacing:-0.12px;">Material &lt;nicht festgelegt&gt;</div>
<div class="abs" style="left:31px;top:244px;width:9px;height:1px;background:repeating-linear-gradient(90deg,#8a8c9a 0,#8a8c9a 1px,transparent 1px,transparent 2px)"></div>
<svg class="abs" style="left:40px;top:236px" width="16" height="16" viewBox="0 0 16 16" overflow="visible"><path d="M8 1.6 L14.6 8 L8 14.4 L1.4 8Z" fill="#f6f6fa" stroke="#1a1a1a" stroke-width="1.1"/><path d="M1.6 1.4 L5 4.8 M11 11.2 L14.6 14.8 M5.6 6.6 L9.6 10.6" stroke="#1a1a1a" stroke-width="1"/></svg>
<div class="abs" style="left:61px;top:236px;line-height:16px;height:16px;white-space:nowrap;font-size:12px;letter-spacing:-0.12px;">Ebene vorne</div>
<div class="abs" style="left:31px;top:262px;width:9px;height:1px;background:repeating-linear-gradient(90deg,#8a8c9a 0,#8a8c9a 1px,transparent 1px,transparent 2px)"></div>
<svg class="abs" style="left:40px;top:254px" width="16" height="16" viewBox="0 0 16 16" overflow="visible"><path d="M8 1.6 L14.6 8 L8 14.4 L1.4 8Z" fill="#f6f6fa" stroke="#1a1a1a" stroke-width="1.1"/><path d="M1.6 1.4 L5 4.8 M11 11.2 L14.6 14.8 M5.6 6.6 L9.6 10.6" stroke="#1a1a1a" stroke-width="1"/></svg>
<div class="abs" style="left:61px;top:254px;line-height:16px;height:16px;white-space:nowrap;font-size:12px;letter-spacing:-0.12px;">Ebene oben</div>
<div class="abs" style="left:31px;top:280px;width:9px;height:1px;background:repeating-linear-gradient(90deg,#8a8c9a 0,#8a8c9a 1px,transparent 1px,transparent 2px)"></div>
<svg class="abs" style="left:40px;top:272px" width="16" height="16" viewBox="0 0 16 16" overflow="visible"><path d="M8 1.6 L14.6 8 L8 14.4 L1.4 8Z" fill="#f6f6fa" stroke="#1a1a1a" stroke-width="1.1"/><path d="M1.6 1.4 L5 4.8 M11 11.2 L14.6 14.8 M5.6 6.6 L9.6 10.6" stroke="#1a1a1a" stroke-width="1"/></svg>
<div class="abs" style="left:61px;top:272px;line-height:16px;height:16px;white-space:nowrap;font-size:12px;letter-spacing:-0.12px;">Ebene rechts</div>
<div class="abs" style="left:31px;top:298px;width:9px;height:1px;background:repeating-linear-gradient(90deg,#8a8c9a 0,#8a8c9a 1px,transparent 1px,transparent 2px)"></div>
<svg class="abs" style="left:40px;top:290px" width="16" height="16" viewBox="0 0 16 16" overflow="visible"><path d="M5 1 V12 H15" fill="none" stroke="#9a9aa2" stroke-width="1.1"/><path d="M5 0.5 l-2 3 h4z M15.5 12 l-3-2 v4z" fill="#b0b0b8"/><path d="M2 9 l6 6 M8 9 l-6 6" stroke="#9a9aa2" stroke-width=".8"/></svg>
<div class="abs" style="left:61px;top:290px;line-height:16px;height:16px;white-space:nowrap;font-size:12px;letter-spacing:-0.12px;">Ursprung</div>
<div class="abs" style="left:31px;top:316px;width:9px;height:1px;background:repeating-linear-gradient(90deg,#8a8c9a 0,#8a8c9a 1px,transparent 1px,transparent 2px)"></div>
<svg class="abs" style="left:40px;top:308px" width="16" height="16" viewBox="0 0 16 16" overflow="visible"><path d="M2 1 V14 H15" fill="none" stroke="#1a1a1a" stroke-width="1.6"/><path d="M3 13 L3 7 L8 3 L9 8 L13 9 L13 13Z" fill="#30b030" stroke="#186018" stroke-width=".8"/><rect x="1" y="13" width="14.6" height="2.6" fill="#e8cc30" stroke="#5a4a10" stroke-width=".7"/><path d="M7 7 L12 2 M9 2 L11 6 M12 5 L8 3" stroke="#e85a18" stroke-width="1"/></svg>
<div class="abs" style="left:61px;top:308px;line-height:16px;height:16px;white-space:nowrap;font-size:12px;letter-spacing:-0.12px;">Schweißkonstruktion</div>
<div class="abs" style="left:31px;top:334px;width:9px;height:1px;background:repeating-linear-gradient(90deg,#8a8c9a 0,#8a8c9a 1px,transparent 1px,transparent 2px)"></div>
<svg class="abs" style="left:40px;top:326px" width="16" height="16" viewBox="0 0 16 16" overflow="visible"><path d="M1.5 7 L8 2 L14.5 9 L8 14Z" fill="#f0d830" stroke="#5a5210" stroke-width="1"/><path d="M1 1 L3.6 3.6 M12.6 12.6 L15 15" stroke="#209a20" stroke-width="1.4"/><path d="M4.4 7 L8 4.2 L11.6 8" stroke="#fff8b0" fill="none"/></svg>
<div class="abs" style="left:61px;top:326px;line-height:16px;height:16px;white-space:nowrap;font-size:12px;letter-spacing:-0.12px;">Ebene1</div>
<div class="abs" style="left:31px;top:352px;width:9px;height:1px;background:repeating-linear-gradient(90deg,#8a8c9a 0,#8a8c9a 1px,transparent 1px,transparent 2px)"></div>
<svg class="abs" style="left:40px;top:344px" width="16" height="16" viewBox="0 0 16 16" overflow="visible"><path d="M1.5 7 L8 2 L14.5 9 L8 14Z" fill="#f0d830" stroke="#5a5210" stroke-width="1"/><path d="M1 1 L3.6 3.6 M12.6 12.6 L15 15" stroke="#209a20" stroke-width="1.4"/><path d="M4.4 7 L8 4.2 L11.6 8" stroke="#fff8b0" fill="none"/></svg>
<div class="abs" style="left:61px;top:344px;line-height:16px;height:16px;white-space:nowrap;font-size:12px;letter-spacing:-0.12px;">Ebene2</div>
<div class="abs" style="left:31px;top:370px;width:9px;height:1px;background:repeating-linear-gradient(90deg,#8a8c9a 0,#8a8c9a 1px,transparent 1px,transparent 2px)"></div>
<svg class="abs" style="left:40px;top:362px" width="16" height="16" viewBox="0 0 16 16" overflow="visible"><path d="M1 2.4 H6 V1 H10.4 V2.4 H15 V14 H10.4 V15.4 H6 V14 H1 V10.6 H3 V6 H1Z" fill="#e6cc58" stroke="#2a2208" stroke-width="1.3" stroke-linejoin="round"/><path d="M1 6 H15 M1 10.6 H6" stroke="#2a2208" stroke-width=".8"/><circle cx="10" cy="8.4" r="3.3" fill="#eef0f8" stroke="#2a2208" stroke-width="1.3"/></svg>
<div class="abs" style="left:61px;top:362px;line-height:16px;height:16px;white-space:nowrap;font-size:12px;letter-spacing:-0.12px;">Blech1</div>
<div class="abs" style="left:31px;top:388px;width:9px;height:1px;background:repeating-linear-gradient(90deg,#8a8c9a 0,#8a8c9a 1px,transparent 1px,transparent 2px)"></div>
<div class="abs" style="left:25px;top:384px;width:9px;height:9px;border:1px solid #8a8c9c;background:linear-gradient(135deg,#fff,#dcdee8);border-radius:1px"></div><div class="abs" style="left:27px;top:388px;width:5px;height:1px;background:#1a1a3a"></div><div class="abs" style="left:29px;top:386px;width:1px;height:5px;background:#1a1a3a"></div>
<svg class="abs" style="left:40px;top:380px" width="16" height="16" viewBox="0 0 16 16" overflow="visible"><path d="M5.6 1 H10.4 L11 5 C11.6 9 13.6 12 15 15 H1 C2.4 12 4.4 9 5 5Z" fill="#f0a030" stroke="#9a5a08" stroke-width=".8"/><path d="M5.6 1 H10.4 L10.8 4 H5.2Z" fill="#6a6a72"/><path d="M8 4.4 V15" stroke="#c87810" stroke-width="1.6"/><path d="M6 5 C5.6 9 4.4 12 3.4 14.4 M10 5 C10.4 9 11.6 12 12.6 14.4" stroke="#fcd890" stroke-width="1.1" fill="none"/></svg>
<div class="abs" style="left:61px;top:380px;line-height:16px;height:16px;white-space:nowrap;font-size:12px;letter-spacing:-0.12px;">Ausgeformte Biegungen1</div>
<div class="abs" style="left:31px;top:406px;width:9px;height:1px;background:repeating-linear-gradient(90deg,#8a8c9a 0,#8a8c9a 1px,transparent 1px,transparent 2px)"></div>
<svg class="abs" style="left:40px;top:398px" width="16" height="16" viewBox="0 0 16 16" overflow="visible"><path d="M1.5 1 V11 C1.5 14 3 15 6 15 H15" fill="none" stroke="#1a1a1a" stroke-width="1.3"/><path d="M3 9 L11 3.4 L13.6 5 L5.4 10.4Z" fill="#f8f8fc" stroke="#1a1a1a" stroke-width=".9"/></svg>
<div class="abs" style="left:61px;top:398px;line-height:16px;height:16px;white-space:nowrap;font-size:12px;letter-spacing:-0.12px;">(-) Skizze5</div>
<div class="abs" style="left:31px;top:424px;width:9px;height:1px;background:repeating-linear-gradient(90deg,#8a8c9a 0,#8a8c9a 1px,transparent 1px,transparent 2px)"></div>
<svg class="abs" style="left:40px;top:416px" width="16" height="16" viewBox="0 0 16 16" overflow="visible"><path d="M1.5 1.5 L14.5 14.5" stroke="#44444c" stroke-width="2.1" stroke-dasharray="3 1.4 1 1.4"/></svg>
<div class="abs" style="left:61px;top:416px;line-height:16px;height:16px;white-space:nowrap;font-size:12px;letter-spacing:-0.12px;color:#8e9098;">Tr2 groß</div>
<div class="abs" style="left:31px;top:442px;width:9px;height:1px;background:repeating-linear-gradient(90deg,#8a8c9a 0,#8a8c9a 1px,transparent 1px,transparent 2px)"></div>
<svg class="abs" style="left:40px;top:434px" width="16" height="16" viewBox="0 0 16 16" overflow="visible"><path d="M1.5 1.5 L14.5 14.5" stroke="#44444c" stroke-width="2.1" stroke-dasharray="3 1.4 1 1.4"/></svg>
<div class="abs" style="left:61px;top:434px;line-height:16px;height:16px;white-space:nowrap;font-size:12px;letter-spacing:-0.12px;color:#8e9098;">Tr2 klein</div>
<div class="abs" style="left:31px;top:460px;width:9px;height:1px;background:repeating-linear-gradient(90deg,#8a8c9a 0,#8a8c9a 1px,transparent 1px,transparent 2px)"></div>
<svg class="abs" style="left:40px;top:452px" width="16" height="16" viewBox="0 0 16 16" overflow="visible"><path d="M1.5 7 L8 2 L14.5 9 L8 14Z" fill="#f0d830" stroke="#5a5210" stroke-width="1"/><path d="M1 1 L3.6 3.6 M12.6 12.6 L15 15" stroke="#209a20" stroke-width="1.4"/><path d="M4.4 7 L8 4.2 L11.6 8" stroke="#fff8b0" fill="none"/></svg>
<div class="abs" style="left:61px;top:452px;line-height:16px;height:16px;white-space:nowrap;font-size:12px;letter-spacing:-0.12px;">Ebene3</div>
<div class="abs" style="left:31px;top:478px;width:9px;height:1px;background:repeating-linear-gradient(90deg,#8a8c9a 0,#8a8c9a 1px,transparent 1px,transparent 2px)"></div>
<svg class="abs" style="left:40px;top:470px" width="16" height="16" viewBox="0 0 16 16" overflow="visible"><path d="M1 2.4 H6 V1 H10.4 V2.4 H15 V14 H10.4 V15.4 H6 V14 H1 V10.6 H3 V6 H1Z" fill="#e6cc58" stroke="#2a2208" stroke-width="1.3" stroke-linejoin="round"/><path d="M1 6 H15 M1 10.6 H6" stroke="#2a2208" stroke-width=".8"/><circle cx="10" cy="8.4" r="3.3" fill="#eef0f8" stroke="#2a2208" stroke-width="1.3"/></svg>
<div class="abs" style="left:61px;top:470px;line-height:16px;height:16px;white-space:nowrap;font-size:12px;letter-spacing:-0.12px;">Blech2</div>
<div class="abs" style="left:31px;top:496px;width:9px;height:1px;background:repeating-linear-gradient(90deg,#8a8c9a 0,#8a8c9a 1px,transparent 1px,transparent 2px)"></div>
<div class="abs" style="left:25px;top:492px;width:9px;height:9px;border:1px solid #8a8c9c;background:linear-gradient(135deg,#fff,#dcdee8);border-radius:1px"></div><div class="abs" style="left:27px;top:496px;width:5px;height:1px;background:#1a1a3a"></div><div class="abs" style="left:29px;top:494px;width:1px;height:5px;background:#1a1a3a"></div>
<svg class="abs" style="left:40px;top:488px" width="16" height="16" viewBox="0 0 16 16" overflow="visible"><path d="M5.6 1 H10.4 L11 5 C11.6 9 13.6 12 15 15 H1 C2.4 12 4.4 9 5 5Z" fill="#f0a030" stroke="#9a5a08" stroke-width=".8"/><path d="M5.6 1 H10.4 L10.8 4 H5.2Z" fill="#6a6a72"/><path d="M8 4.4 V15" stroke="#c87810" stroke-width="1.6"/><path d="M6 5 C5.6 9 4.4 12 3.4 14.4 M10 5 C10.4 9 11.6 12 12.6 14.4" stroke="#fcd890" stroke-width="1.1" fill="none"/></svg>
<div class="abs" style="left:61px;top:488px;line-height:16px;height:16px;white-space:nowrap;font-size:12px;letter-spacing:-0.12px;">Ausgeformte Biegungen2</div>
<div class="abs" style="left:31px;top:514px;width:9px;height:1px;background:repeating-linear-gradient(90deg,#8a8c9a 0,#8a8c9a 1px,transparent 1px,transparent 2px)"></div>
<svg class="abs" style="left:40px;top:506px" width="16" height="16" viewBox="0 0 16 16" overflow="visible"><path d="M1 2.4 H6 V1 H10.4 V2.4 H15 V14 H10.4 V15.4 H6 V14 H1 V10.6 H3 V6 H1Z" fill="#e6cc58" stroke="#2a2208" stroke-width="1.3" stroke-linejoin="round"/><path d="M1 6 H15 M1 10.6 H6" stroke="#2a2208" stroke-width=".8"/><circle cx="10" cy="8.4" r="3.3" fill="#eef0f8" stroke="#2a2208" stroke-width="1.3"/></svg>
<div class="abs" style="left:61px;top:506px;line-height:16px;height:16px;white-space:nowrap;font-size:12px;letter-spacing:-0.12px;">Blech3</div>
<div class="abs" style="left:31px;top:532px;width:9px;height:1px;background:repeating-linear-gradient(90deg,#8a8c9a 0,#8a8c9a 1px,transparent 1px,transparent 2px)"></div>
<div class="abs" style="left:25px;top:528px;width:9px;height:9px;border:1px solid #8a8c9c;background:linear-gradient(135deg,#fff,#dcdee8);border-radius:1px"></div><div class="abs" style="left:27px;top:532px;width:5px;height:1px;background:#1a1a3a"></div><div class="abs" style="left:29px;top:530px;width:1px;height:5px;background:#1a1a3a"></div>
<svg class="abs" style="left:40px;top:524px" width="16" height="16" viewBox="0 0 16 16" overflow="visible"><path d="M1 2 L5 4 V14 L1 12Z" fill="#f4f4f8" stroke="#2a2a30" stroke-width=".9"/><path d="M5 4 L10 14 L5 14Z" fill="#4a7ae0" stroke="#1a3a90" stroke-width=".8"/><path d="M10 2 L15 6 V14 L10 14 L7 8Z" fill="#e8c030" stroke="#6a5410" stroke-width=".9"/></svg>
<div class="abs" style="left:61px;top:524px;line-height:16px;height:16px;white-space:nowrap;font-size:12px;letter-spacing:-0.12px;">Basis-Blech1</div>
<div class="abs" style="left:31px;top:550px;width:9px;height:1px;background:repeating-linear-gradient(90deg,#8a8c9a 0,#8a8c9a 1px,transparent 1px,transparent 2px)"></div>
<div class="abs" style="left:25px;top:546px;width:9px;height:9px;border:1px solid #8a8c9c;background:linear-gradient(135deg,#fff,#dcdee8);border-radius:1px"></div><div class="abs" style="left:27px;top:550px;width:5px;height:1px;background:#1a1a3a"></div><div class="abs" style="left:29px;top:548px;width:1px;height:5px;background:#1a1a3a"></div>
<svg class="abs" style="left:40px;top:542px" width="16" height="16" viewBox="0 0 16 16" overflow="visible"><path d="M1 1.6 H12.4 L15 4.2 V15.4 H3.6 L1 12.8Z" fill="#e0c020" stroke="#1a1808" stroke-width="1.3" stroke-linejoin="round"/><rect x="3.6" y="4.2" width="11.4" height="11.2" rx="1.6" fill="#f4dc38" stroke="#1a1808" stroke-width="1.3"/><path d="M1 1.6 L3.8 4.4" stroke="#1a1808" stroke-width="1"/><rect x="6.2" y="6.8" width="6" height="6" fill="#249a34" stroke="#0c300c" stroke-width="1.1"/><path d="M7.4 8 h3.6 v2 h-3.6z" fill="#e8f4e0"/></svg>
<div class="abs" style="left:61px;top:542px;line-height:16px;height:16px;white-space:nowrap;font-size:12px;letter-spacing:-0.12px;">Schnitt-Linear austragen8</div>
<div class="abs" style="left:31px;top:568px;width:9px;height:1px;background:repeating-linear-gradient(90deg,#8a8c9a 0,#8a8c9a 1px,transparent 1px,transparent 2px)"></div>
<div class="abs" style="left:25px;top:564px;width:9px;height:9px;border:1px solid #8a8c9c;background:linear-gradient(135deg,#fff,#dcdee8);border-radius:1px"></div><div class="abs" style="left:27px;top:568px;width:5px;height:1px;background:#1a1a3a"></div>
<svg class="abs" style="left:40px;top:560px" width="16" height="16" viewBox="0 0 16 16" overflow="visible"><path d="M1 1.6 H12.4 L15 4.2 V15.4 H3.6 L1 12.8Z" fill="#e0c020" stroke="#1a1808" stroke-width="1.3" stroke-linejoin="round"/><rect x="3.6" y="4.2" width="11.4" height="11.2" rx="1.6" fill="#f4dc38" stroke="#1a1808" stroke-width="1.3"/><path d="M1 1.6 L3.8 4.4" stroke="#1a1808" stroke-width="1"/><rect x="6.2" y="6.8" width="6" height="6" fill="#249a34" stroke="#0c300c" stroke-width="1.1"/><path d="M7.4 8 h3.6 v2 h-3.6z" fill="#e8f4e0"/></svg>
<svg class="abs" style="left:59px;top:560px" width="16" height="16" viewBox="0 0 16 16" overflow="visible"><circle cx="7" cy="8" r="6.2" fill="#e02830" stroke="#8a1018" stroke-width=".8"/><path d="M4.4 5.4 L9.6 10.6 M9.6 5.4 L4.4 10.6" stroke="#fff" stroke-width="2" stroke-linecap="round"/></svg>
<div class="abs" style="left:78px;top:560px;line-height:16px;height:16px;white-space:nowrap;font-size:12px;letter-spacing:-0.12px;color:#9e1820;">Schnitt-Linear austragen9 -&gt;</div>
<div class="abs" style="left:50px;top:586px;width:9px;height:1px;background:repeating-linear-gradient(90deg,#8a8c9a 0,#8a8c9a 1px,transparent 1px,transparent 2px)"></div>
<svg class="abs" style="left:59px;top:578px" width="16" height="16" viewBox="0 0 16 16" overflow="visible"><path d="M1.5 1 V11 C1.5 14 3 15 6 15 H15" fill="none" stroke="#1830d0" stroke-width="1.5"/><path d="M3 9 L11 3.4 L13.6 5 L5.4 10.4Z" fill="#5a8af0" stroke="#1830d0" stroke-width="1"/></svg>
<div class="abs" style="left:80px;top:578px;line-height:16px;height:16px;white-space:nowrap;font-size:12px;letter-spacing:-0.12px;background:#3a8ee8;color:#fff;padding:0 1px;margin-left:-1px;width:75px;letter-spacing:-0.32px;">(-) Skizze22 -&gt;</div>
<div class="abs" style="left:31px;top:604px;width:9px;height:1px;background:repeating-linear-gradient(90deg,#8a8c9a 0,#8a8c9a 1px,transparent 1px,transparent 2px)"></div>
<div class="abs" style="left:25px;top:600px;width:9px;height:9px;border:1px solid #8a8c9c;background:linear-gradient(135deg,#fff,#dcdee8);border-radius:1px"></div><div class="abs" style="left:27px;top:604px;width:5px;height:1px;background:#1a1a3a"></div><div class="abs" style="left:29px;top:602px;width:1px;height:5px;background:#1a1a3a"></div>
<svg class="abs" style="left:40px;top:596px" width="16" height="16" viewBox="0 0 16 16" overflow="visible"><path d="M1 1.6 H12.4 L15 4.2 V15.4 H3.6 L1 12.8Z" fill="#e0c020" stroke="#1a1808" stroke-width="1.3" stroke-linejoin="round"/><rect x="3.6" y="4.2" width="11.4" height="11.2" rx="1.6" fill="#f4dc38" stroke="#1a1808" stroke-width="1.3"/><path d="M1 1.6 L3.8 4.4" stroke="#1a1808" stroke-width="1"/><rect x="6.2" y="6.8" width="6" height="6" fill="#249a34" stroke="#0c300c" stroke-width="1.1"/><path d="M7.4 8 h3.6 v2 h-3.6z" fill="#e8f4e0"/></svg>
<div class="abs" style="left:61px;top:596px;line-height:16px;height:16px;white-space:nowrap;font-size:12px;letter-spacing:-0.12px;">Schnitt-Linear austragen12-&gt;?</div>
<div class="abs" style="left:31px;top:622px;width:9px;height:1px;background:repeating-linear-gradient(90deg,#8a8c9a 0,#8a8c9a 1px,transparent 1px,transparent 2px)"></div>
<div class="abs" style="left:25px;top:618px;width:9px;height:9px;border:1px solid #8a8c9c;background:linear-gradient(135deg,#fff,#dcdee8);border-radius:1px"></div><div class="abs" style="left:27px;top:622px;width:5px;height:1px;background:#1a1a3a"></div><div class="abs" style="left:29px;top:620px;width:1px;height:5px;background:#1a1a3a"></div>
<svg class="abs" style="left:40px;top:614px" width="16" height="16" viewBox="0 0 16 16" overflow="visible"><path d="M1 6 L5 2 H15 L11 6Z" fill="#d8d8dc" stroke="#8a8a92" stroke-width=".9"/><path d="M1 6 H11 V14 H1Z" fill="#c0c0c6" stroke="#8a8a92" stroke-width=".9"/><path d="M11 6 L15 2 V10 L11 14Z" fill="#a8a8b0" stroke="#8a8a92" stroke-width=".9"/><path d="M3 8 L9 12" stroke="#e8e8ec" stroke-width="1.4"/></svg>
<div class="abs" style="left:61px;top:614px;line-height:16px;height:16px;white-space:nowrap;font-size:12px;letter-spacing:-0.12px;color:#8e9098;">Abwicklung1</div>
<div class="abs" style="left:31px;top:640px;width:9px;height:1px;background:repeating-linear-gradient(90deg,#8a8c9a 0,#8a8c9a 1px,transparent 1px,transparent 2px)"></div>
<div class="abs" style="left:25px;top:636px;width:9px;height:9px;border:1px solid #8a8c9c;background:linear-gradient(135deg,#fff,#dcdee8);border-radius:1px"></div><div class="abs" style="left:27px;top:640px;width:5px;height:1px;background:#1a1a3a"></div><div class="abs" style="left:29px;top:638px;width:1px;height:5px;background:#1a1a3a"></div>
<svg class="abs" style="left:40px;top:632px" width="16" height="16" viewBox="0 0 16 16" overflow="visible"><path d="M1 6 L5 2 H15 L11 6Z" fill="#d8d8dc" stroke="#8a8a92" stroke-width=".9"/><path d="M1 6 H11 V14 H1Z" fill="#c0c0c6" stroke="#8a8a92" stroke-width=".9"/><path d="M11 6 L15 2 V10 L11 14Z" fill="#a8a8b0" stroke="#8a8a92" stroke-width=".9"/><path d="M3 8 L9 12" stroke="#e8e8ec" stroke-width="1.4"/></svg>
<div class="abs" style="left:61px;top:632px;line-height:16px;height:16px;white-space:nowrap;font-size:12px;letter-spacing:-0.12px;color:#8e9098;">Abwicklung2</div>
</div>
<!--/TREE-->
<!--RIGHT-->
<div class="abs" style="left:1230px;top:102px;width:3px;height:750px;background:linear-gradient(90deg,#9092a2 0,#9092a2 1px,#5a5c6c 1px,#5a5c6c 2px,#a8aab8 2px)"></div>
<div class="abs" style="left:1233px;top:102px;width:207px;height:750px;background:#e1e4ee"></div>
<div class="abs" style="left:1233px;top:102px;width:207px;height:21px;background:linear-gradient(#f4f5f9,#e6e8f0)"></div>
<div class="abs" style="left:1233px;top:123px;width:207px;height:1px;background:#c4c6d4"></div>
<div class="abs" style="left:1237px;top:105px;font-size:12px;font-weight:bold;color:#2a2a6a;white-space:nowrap;letter-spacing:-0.12px">Benutzerdefinierte Eigenschaft...</div>
<svg class="abs" style="left:1424px;top:104px" width="15" height="15" viewBox="0 0 16 16"><ellipse cx="9" cy="6" rx="5.2" ry="4.6" fill="#e6e6ea" stroke="#2a2a32" stroke-width="1.2"/><path d="M5 9 L2 13" stroke="#2a2a32" stroke-width="1.6"/><path d="M5.5 7.5 C7 10 10 10.5 12.5 9" fill="none" stroke="#2a2a32" stroke-width="1.2"/></svg>
<div class="abs" style="left:1239px;top:128px;width:198px;height:265px;background:#ffee58"></div>
<div class="abs" style="left:1244.5px;top:135.9px;width:196px;font-size:12px;line-height:15.93px;color:#1c1c10;white-space:nowrap;letter-spacing:-0.07px">Eigenschaftsseite für<br>Baugrupppendateien nicht<br>gefunden. Klicken Sie auf 'Jetzt<br>erstellen...', um die Eigenschaften-<br>Registerkarten-Erstellung zu<br>starten.<br><br>Wenn Sie bereits über eine Vorlage<br>verfügen, platzieren Sie sie in den<br>Ordner, der in Extras - Optionen -<br>Dateipositionen - Dateien für<br>benutzerdefinierte Eigenschaften<br>definiert ist.<br><br>Drücken Sie F5, um die Seite zu<br>aktualisieren.</div>
<div class="abs" style="left:1263px;top:403px;width:150px;height:30px;border:1px solid #70717a;border-radius:3px;background:linear-gradient(#f6f6f6,#ececec 45%,#dcdcdc 50%,#d2d2d2);box-shadow:inset 0 0 0 1px #fafafa;text-align:center;line-height:31px;font-size:12px;color:#15151a;letter-spacing:-0.1px">Jetzt erstellen...</div>
<div class="abs" style="left:1233px;top:811px;width:207px;height:41px;background:linear-gradient(#6d6f86,#80829a 45%,#9496aa)"></div>
<div class="abs" style="left:1249px;top:819px;width:147px;height:25px;border-radius:3px;background:#f2f2f4;border:1px solid #fafafa;text-align:center;line-height:24px;font-size:12px;color:#a2a2aa;letter-spacing:-0.1px">Weitere Eigenschaften...</div>
<div class="abs" style="left:1403px;top:819px;width:24px;height:25px;border-radius:3px;background:#f2f2f4;border:1px solid #fafafa"></div>
<svg class="abs" style="left:1406px;top:822px" width="18" height="18" viewBox="0 0 18 18"><rect x="2" y="6" width="13" height="10" fill="#f4f4f6" stroke="#9a9aa2"/><path d="M4 9 H13 M4 12 H13 M8.5 6 V16" stroke="#b0b8c0" stroke-width=".8"/><path d="M5 13 l1.5 1.5 l3-3" stroke="#8ab08a" fill="none"/><path d="M3 5 L9 2 L14 3 L11 7 L5 7Z" fill="#e0c8a0" stroke="#b09a78" stroke-width=".7"/></svg>
<div class="abs" style="left:1207px;top:163px;width:24px;height:24px;border:1px solid #8688a0;border-right:none;border-radius:5px 0 0 5px;background:linear-gradient(#c6c8da,#b2b4c8)"></div>
<div class="abs" style="left:1207px;top:187px;width:24px;height:24px;border:1px solid #8688a0;border-right:none;border-radius:5px 0 0 5px;background:linear-gradient(#c6c8da,#b2b4c8)"></div>
<div class="abs" style="left:1207px;top:211px;width:24px;height:24px;border:1px solid #8688a0;border-right:none;border-radius:5px 0 0 5px;background:linear-gradient(#c6c8da,#b2b4c8)"></div>
<div class="abs" style="left:1207px;top:235px;width:24px;height:24px;border:1px solid #8688a0;border-right:none;border-radius:5px 0 0 5px;background:linear-gradient(#c6c8da,#b2b4c8)"></div>
<div class="abs" style="left:1207px;top:259px;width:24px;height:24px;border:1px solid #8688a0;border-right:none;border-radius:5px 0 0 5px;background:linear-gradient(#c6c8da,#b2b4c8)"></div>
<div class="abs" style="left:1207px;top:283px;width:24px;height:24px;border:1px solid #8688a0;border-right:none;border-radius:5px 0 0 5px;background:linear-gradient(#c6c8da,#b2b4c8)"></div>
<div class="abs" style="left:1207px;top:307px;width:25px;height:24px;border:1px solid #a0a2b4;border-right:none;border-radius:5px 0 0 5px;background:#ecedf3"></div>
<svg class="abs" style="left:1210px;top:166px" width="18" height="18" viewBox="0 0 18 18"><path d="M2 9 L9 2.5 L16 9" fill="none" stroke="#8a5a10" stroke-width="1.6"/><path d="M4 8.5 V15.5 H14 V8.5 L9 4Z" fill="#f8e060" stroke="#8a6a10" stroke-width=".9"/><rect x="7.6" y="10" width="3" height="5.5" fill="#fff8d0" stroke="#8a6a10" stroke-width=".7"/><rect x="12.4" y="3" width="2" height="3.4" fill="#c83a20"/></svg>
<svg class="abs" style="left:1210px;top:190px" width="18" height="18" viewBox="0 0 18 18"><path d="M2 10 L5 8.4 L8 10 V15 L5 16.6 L2 15Z" fill="#30a840" stroke="#10401a" stroke-width=".9"/><path d="M7 7 L10 5.4 L12 7 V15.6 L9.6 17 L7 15.6Z" fill="#f0d030" stroke="#4a4010" stroke-width=".9"/><path d="M11.6 4 L14 2 L16.4 4 V14 L14 15.6 L11.6 14Z" fill="#3a6ae0" stroke="#10205a" stroke-width=".9"/><circle cx="5.6" cy="6.6" r="2.2" fill="#30a840" stroke="#10401a" stroke-width=".8"/></svg>
<svg class="abs" style="left:1210px;top:214px" width="18" height="18" viewBox="0 0 18 18"><path d="M1.5 4 H7 L8.4 5.6 H14 V8 H1.5Z" fill="#e8b830" stroke="#8a6a10" stroke-width=".9"/><path d="M1.5 15 L4.4 8 H17 L14 15Z" fill="#fbe88a" stroke="#8a6a10" stroke-width=".9"/><path d="M1.5 15 V5" stroke="#8a6a10" stroke-width=".9"/></svg>
<svg class="abs" style="left:1210px;top:238px" width="18" height="18" viewBox="0 0 18 18"><circle cx="7" cy="8" r="5.6" fill="#e03838" stroke="#7a1010" stroke-width=".9"/><path d="M4 7 a3 3 0 0 1 6 0 M5 10 h4" stroke="#fff" stroke-width="1.3" fill="none"/><path d="M9 4 L16 6 L14 14 L11 12 Z" fill="#d8dce8" stroke="#4a4a5a" stroke-width=".8"/><path d="M12 13 L15.5 17" stroke="#c02020" stroke-width="1.8"/></svg>
<svg class="abs" style="left:1210px;top:262px" width="18" height="18" viewBox="0 0 18 18"><rect x="2" y="2" width="14" height="9" fill="#f4f6fc" stroke="#2a2a5a" stroke-width="1"/><rect x="4" y="4" width="4" height="2" fill="#e0c020" stroke="#2a2a5a" stroke-width=".6"/><rect x="10" y="4" width="4" height="2" fill="#30a030" stroke="#2a2a5a" stroke-width=".6"/><rect x="4" y="7.4" width="10" height="2" fill="#5a7ae0" stroke="#2a2a5a" stroke-width=".6"/><path d="M3 14.5 H9 M7 12 L9.6 14.5 L7 17" stroke="#1030c0" stroke-width="1.5" fill="none"/></svg>
<svg class="abs" style="left:1210px;top:286px" width="18" height="18" viewBox="0 0 18 18"><circle cx="9" cy="9" r="7" fill="#e8e8ec" stroke="#555" stroke-width=".6"/><path d="M9 9 L9 2 A7 7 0 0 1 15.6 11.4Z" fill="#e03028"/><path d="M9 9 L15.6 11.4 A7 7 0 0 1 3 12.6Z" fill="#30a838"/><path d="M9 9 L3 12.6 A7 7 0 0 1 9 2Z" fill="#2a5ae0"/><circle cx="7.4" cy="6.4" r="2.2" fill="#fff" opacity=".55"/></svg>
<svg class="abs" style="left:1210px;top:310px" width="18" height="18" viewBox="0 0 18 18"><rect x="3" y="6" width="11" height="11" fill="#fafafc" stroke="#5a5a62" stroke-width=".9"/><path d="M5 9 H12 M5 11.4 H12 M5 13.8 H12" stroke="#9a9aa8" stroke-width=".8"/><rect x="6" y="4.6" width="5" height="2.6" fill="#8a8a92"/><path d="M6 5 L12 1.4 L16 3 L13 7.4 L8 7.4Z" fill="#e8c898" stroke="#8a6a40" stroke-width=".7"/></svg>
<!--/RIGHT-->
<!--HUD-->
<svg class="abs" style="left:596px;top:108px" width="18" height="18" viewBox="0 0 18 18" overflow="visible"><circle cx="7" cy="7" r="5.4" fill="#e4ecf8" stroke="#5a5c6c" stroke-width="1.4"/><path d="M4.6 6 V4.6 H6 M8 4.6 H9.4 V6 M9.4 8 V9.4 H8 M6 9.4 H4.6 V8" stroke="#3a3c4c" fill="none" stroke-width=".9"/><path d="M11 11 L15.6 15.6" stroke="#5a8ad8" stroke-width="2.6" stroke-linecap="round"/></svg>
<svg class="abs" style="left:619px;top:108px" width="18" height="18" viewBox="0 0 18 18" overflow="visible"><circle cx="7" cy="7" r="5.4" fill="#e4ecf8" stroke="#5a5c6c" stroke-width="1.4"/><rect x="2" y="1.6" width="8" height="8" fill="none" stroke="#3a3c4c" stroke-width=".8" stroke-dasharray="1.4 1"/><path d="M7 4.6 V7.4 H8.6" stroke="#3a3c4c" fill="none" stroke-width=".9"/><path d="M11 11 L15.6 15.6" stroke="#5a8ad8" stroke-width="2.6" stroke-linecap="round"/></svg>
<svg class="abs" style="left:642px;top:108px" width="18" height="18" viewBox="0 0 18 18" overflow="visible"><path d="M2 2 L9 10" stroke="#4a6ab8" stroke-width="2.6" stroke-linecap="round"/><ellipse cx="11" cy="12" rx="3" ry="4.4" transform="rotate(-40 11 12)" fill="#d8e8fc" stroke="#4a6ab8" stroke-width="1.3"/><path d="M16 4 H10 M12 2 L9.6 4 L12 6" stroke="#2a4ac0" fill="none" stroke-width="1.3"/></svg>
<svg class="abs" style="left:665px;top:108px" width="18" height="18" viewBox="0 0 18 18" overflow="visible"><path d="M2 3 C2 1 14 1 14 3 V14 C14 16 2 16 2 14Z" fill="#4a7ac8" stroke="#1a3a7a" stroke-width=".9"/><rect x="2.4" y="4" width="3" height="11" fill="#f0d828" stroke="#6a5a10" stroke-width=".6"/><rect x="10.6" y="4" width="3" height="11" fill="#f0d828" stroke="#6a5a10" stroke-width=".6"/><ellipse cx="8" cy="3" rx="6" ry="1.6" fill="#9ac0f0" stroke="#1a3a7a" stroke-width=".7"/><path d="M3 6 h2 M3 8.4 h2 M3 10.8 h2 M3 13.2 h2 M11 6 h2 M11 8.4 h2 M11 10.8 h2 M11 13.2 h2" stroke="#2a2a10" stroke-width=".7"/></svg>
<svg class="abs" style="left:688px;top:108px" width="18" height="18" viewBox="0 0 18 18" overflow="visible"><path d="M1.5 6 L6 1.5 H15.5 V11 L11 15.5 H1.5Z" fill="#f4f6fc" stroke="#4a4c5c" stroke-width="1"/><path d="M1.5 6 H11 V15.5 M11 6 L15.5 1.5" fill="none" stroke="#4a4c5c" stroke-width="1"/><rect x="1.5" y="6" width="9.5" height="9.5" fill="#5a9ae8" stroke="#2a4a9a" stroke-width="1"/><path d="M12 9 h3 M8 2.4 v3" stroke="#c03030" stroke-width=".9"/></svg>
<svg class="abs" style="left:721px;top:108px" width="18" height="18" viewBox="0 0 18 18" overflow="visible"><path d="M1.5 6 L5 2 H15.5 V11 L12 15.5 H1.5Z" fill="#b8d4f8" stroke="#3a4a7a" stroke-width="1"/><rect x="1.5" y="6" width="10.5" height="9.5" fill="#e4eefc" stroke="#3a4a7a" stroke-width="1"/><path d="M12 6 L15.5 2" stroke="#3a4a7a" stroke-width="1"/><path d="M12 6 L15.5 2 V11 L12 15.5Z" fill="#6a9ae0" stroke="#3a4a7a" stroke-width="1"/></svg>
<svg class="abs" style="left:754px;top:108px" width="18" height="18" viewBox="0 0 18 18" overflow="visible"><circle cx="4.6" cy="11" r="3.2" fill="none" stroke="#5a5c6c" stroke-width="1.2"/><circle cx="12" cy="11" r="3.2" fill="none" stroke="#5a5c6c" stroke-width="1.2"/><path d="M7.8 10.4 C8 9.6 8.8 9.6 9 10.4 M2 9 C2.6 5 4 3.6 6 4 M15 9.4 C16 7 17 6.4 18 7" fill="none" stroke="#5a5c6c" stroke-width="1.1"/></svg>
<svg class="abs" style="left:787px;top:108px" width="18" height="18" viewBox="0 0 18 18" overflow="visible"><circle cx="9" cy="9" r="8" fill="#e8e8ec" stroke="#444" stroke-width=".5"/><path d="M9 9 L9 1 A8 8 0 0 1 16.6 11.6Z" fill="#e03830"/><path d="M9 9 L16.6 11.6 A8 8 0 0 1 2.2 13.2Z" fill="#38b040"/><path d="M9 9 L2.2 13.2 A8 8 0 0 1 9 1Z" fill="#3068e0"/><ellipse cx="7" cy="5.6" rx="3.4" ry="2.4" fill="#fff" opacity=".5"/></svg>
<svg class="abs" style="left:810px;top:108px" width="18" height="18" viewBox="0 0 18 18" overflow="visible"><path d="M1 11 H17 V17 H1Z" fill="#fff" stroke="#222" stroke-width=".6"/><path d="M1 11 h4 v3 h-4z M9 11 h4 v3 h-4z M5 14 h4 v3 h-4z M13 14 h4 v3 h-4z" fill="#222"/><circle cx="9" cy="7.4" r="6.4" fill="#e8e8ec"/><path d="M9 7.4 L9 1 A6.4 6.4 0 0 1 15 9.6Z" fill="#e03830"/><path d="M9 7.4 L15 9.6 A6.4 6.4 0 0 1 3.4 10.6Z" fill="#38b040"/><path d="M9 7.4 L3.4 10.6 A6.4 6.4 0 0 1 9 1Z" fill="#3068e0"/><ellipse cx="7.4" cy="4.6" rx="2.6" ry="1.8" fill="#fff" opacity=".5"/></svg>
<svg class="abs" style="left:843px;top:108px" width="18" height="18" viewBox="0 0 18 18" overflow="visible"><circle cx="9" cy="9" r="8" fill="#e0a818" stroke="#8a6408" stroke-width=".7"/><ellipse cx="8" cy="6" rx="4.6" ry="3.4" fill="#fff4b0" opacity=".85"/><path d="M3 12 C6 16 12 16 15 12 C12 14 6 14 3 12Z" fill="#a87408"/><path d="M9 8 V12 M7 10.4 L9 12.4 L11 10.4" stroke="#7a5408" stroke-width="1" fill="none"/></svg>
<div class="dd" style="left:709px;top:116px;border-top-color:#4a4c5c"></div>
<div class="dd" style="left:742px;top:116px;border-top-color:#4a4c5c"></div>
<div class="dd" style="left:775px;top:116px;border-top-color:#4a4c5c"></div>
<div class="dd" style="left:830px;top:116px;border-top-color:#4a4c5c"></div>
<div class="dd" style="left:864px;top:116px;border-top-color:#4a4c5c"></div>
<div class="abs" style="left:1162px;top:119px;width:8px;height:3px;background:#777988;border-radius:1px"></div>
<svg class="abs" style="left:1182px;top:111px" width="14" height="14" viewBox="0 0 14 14"><rect x="4" y="1.5" width="8.5" height="6" fill="none" stroke="#6a6c7c" stroke-width="1.5"/><rect x="1.5" y="6" width="8.5" height="6" fill="#c5c8d5" stroke="#6a6c7c" stroke-width="1.5"/></svg>
<svg class="abs" style="left:1207px;top:112px" width="13" height="13" viewBox="0 0 14 14"><path d="M2 2 L12 12 M12 2 L2 12" stroke="#6a6c7c" stroke-width="2.2" stroke-linecap="round"/></svg>
<div class="abs" style="left:239px;top:455px;width:11px;height:28px;background:#dedef0;border-radius:0 3px 3px 0"></div>
<div class="abs" style="left:244px;top:459px;width:0;height:0;border-top:2.5px solid transparent;border-bottom:2.5px solid transparent;border-right:4px solid #8a8c9c"></div>
<div class="abs" style="left:244px;top:467px;width:0;height:0;border-top:2.5px solid transparent;border-bottom:2.5px solid transparent;border-right:4px solid #8a8c9c"></div>
<div class="abs" style="left:244px;top:475px;width:0;height:0;border-top:2.5px solid transparent;border-bottom:2.5px solid transparent;border-right:4px solid #8a8c9c"></div>
<div class="abs" style="left:230px;top:459.5px;width:7px;height:9px;background:repeating-linear-gradient(0deg,#3a3a3e 0,#3a3a3e 1.5px,transparent 1.5px,transparent 3.5px)"></div>
<!--/HUD-->
<!--BOTTOM-->
<div class="abs" style="left:0;top:835.7px;width:1231px;height:1.1px;background:#16171e"></div>
<div class="abs" style="left:0;top:837px;width:1231px;height:14px;background:#e6e8f0"></div><div class="abs" style="left:0;top:851px;width:1440px;height:1px;background:#8e90a0"></div>
<div class="abs" style="left:2px;top:838px;width:65px;height:13px;background:#b8bacb;border:1px solid #9c9eb2"></div>
<div class="abs" style="left:18px;top:838px;width:1px;height:12px;background:#9c9eb2"></div>
<div class="abs" style="left:34px;top:838px;width:1px;height:12px;background:#9c9eb2"></div>
<div class="abs" style="left:50px;top:838px;width:1px;height:12px;background:#9c9eb2"></div>
<div class="abs" style="left:66px;top:838px;width:1px;height:12px;background:#9c9eb2"></div>
<div class="abs" style="left:5px;top:840px;width:1px;height:8px;background:#9a9cb0"></div><div class="abs" style="left:7px;top:840px;width:0;height:0;border-top:4px solid transparent;border-bottom:4px solid transparent;border-right:5px solid #9a9cb0"></div>
<div class="abs" style="left:23px;top:840px;width:0;height:0;border-top:4px solid transparent;border-bottom:4px solid transparent;border-right:5px solid #9a9cb0"></div>
<div class="abs" style="left:40px;top:840px;width:0;height:0;border-top:4px solid transparent;border-bottom:4px solid transparent;border-left:5px solid #9a9cb0"></div>
<div class="abs" style="left:55px;top:840px;width:0;height:0;border-top:4px solid transparent;border-bottom:4px solid transparent;border-left:5px solid #9a9cb0"></div><div class="abs" style="left:61px;top:840px;width:1px;height:8px;background:#9a9cb0"></div>
<div class="abs" style="left:69px;top:837px;width:57px;height:14px;background:#eceef4;border:1px solid #8a8ca0;border-top:none;text-align:center;font-size:12px;font-weight:bold;line-height:13px;color:#1a1a24">Modell</div>
<div class="abs" style="left:127px;top:837px;width:131px;height:13.5px;background:#bfc0d4;border:1.5px solid #55566a;border-top:none;text-align:left;padding-left:6px;font-size:12px;line-height:12px;color:#2a2a3a;letter-spacing:0.22px;white-space:nowrap">Bewegungsstudie 1</div>
<!--/BOTTOM-->
<!--STATUS-->
<div class="abs" style="left:0;top:852px;width:1440px;height:18px;background:linear-gradient(#dddeec,#d0d2e3 55%,#bfc1d5)"></div>

<div class="abs" style="left:2px;top:855px;font-size:12px;color:#101018;white-space:nowrap;letter-spacing:-0.17px">SolidWorks Premium 2010</div>
<div class="abs" style="left:1106px;top:855px;font-size:12px;color:#101018;white-space:nowrap;letter-spacing:0.07px">Unterdefiniert</div>
<div class="abs" style="left:1197px;top:855px;font-size:12px;color:#101018;white-space:nowrap;letter-spacing:-0.2px">Bearbeiten Baugruppe</div>
<div class="abs" style="left:1183px;top:855px;width:1px;height:13px;background:#b4b6c8"></div><div class="abs" style="left:1184px;top:855px;width:1px;height:13px;background:#f0f1f8"></div>
<div class="abs" style="left:1320px;top:855px;width:1px;height:13px;background:#b4b6c8"></div><div class="abs" style="left:1321px;top:855px;width:1px;height:13px;background:#f0f1f8"></div>
<div class="abs" style="left:1328px;top:855px;width:1px;height:13px;background:#b4b6c8"></div><div class="abs" style="left:1329px;top:855px;width:1px;height:13px;background:#f0f1f8"></div>
<div class="abs" style="left:1347px;top:854px;width:12px;height:12px;background:#f4fff4;border:1px solid #3a6a8a;font-size:11px;font-weight:bold;color:#18a028;line-height:10px;text-align:center">?</div>
<svg class="abs" style="left:1410px;top:853px" width="16" height="16" viewBox="0 0 16 16"><path d="M2 9 L8 3 L14 2 L13.4 8 L7 14Z" fill="#f0c830" stroke="#8a6a08" stroke-width="1.1"/><circle cx="11" cy="5" r="1.3" fill="#fff8d0" stroke="#8a6a08" stroke-width=".6"/><path d="M5 9 L8 12" stroke="#fff0a0" stroke-width="1"/></svg>
<!--/STATUS-->
<!--TASKBAR-->
<div class="abs" style="left:0;top:870px;width:1440px;height:30px;background:linear-gradient(#3a3e44 0,#3a3e44 1px,#9ea2a8 1px,#9ea2a8 2px,#777b80 2px,#64676c 8px,#383c42 14.5px,#050709 15px,#05070a 100%)"></div>
<svg class="abs" style="left:8px;top:864px" width="46" height="36" viewBox="0 0 46 36"><defs><radialGradient id="orb" cx=".5" cy=".95" r=".95"><stop offset="0" stop-color="#3aa8f0"/><stop offset=".35" stop-color="#1f6aa8"/><stop offset=".7" stop-color="#2a5a80"/><stop offset="1" stop-color="#7aa8c4"/></radialGradient></defs><circle cx="22.5" cy="23" r="20.6" fill="#0c1a28"/><circle cx="22.5" cy="23" r="19" fill="url(#orb)" stroke="#8ab4cc" stroke-width="1" stroke-opacity=".8"/><path d="M5 19 A18 18 0 0 1 40 19 C30 24 15 24 5 19Z" fill="#fff" opacity=".28"/>
<g transform="translate(22.5 23) scale(1.3) translate(-20.4 -21.6)"><path d="M13 14.5 C16 13 19 13 21 14.5 L19.5 21 C17.5 19.6 14.5 19.6 11.6 21Z" fill="#f0702c"/><path d="M22.6 15 C25 16.4 28 16.4 31 15 L29.4 21.4 C26.4 22.8 23.6 22.8 21 21.4Z" fill="#8cc63c"/><path d="M11.2 22.6 C14 21.2 17 21.2 19.2 22.6 L17.6 29 C15.6 27.6 12.6 27.6 9.6 29Z" fill="#3aa4ec"/><path d="M20.8 23 C23.2 24.4 26 24.4 29 23 L27.4 29.4 C24.6 30.8 21.6 30.8 19.2 29.4Z" fill="#f8c828"/></g></svg>
<svg class="abs" style="left:64px;top:876px" width="17" height="17" viewBox="0 0 18 18"><rect x="1" y="1" width="16" height="16" rx="1.4" fill="#2848d0" stroke="#e8ecff" stroke-width="1"/><rect x="4" y="1.6" width="9" height="5.6" fill="#f4f6ff"/><rect x="9.6" y="2.4" width="2.2" height="4" fill="#2848d0"/><rect x="3.4" y="9.4" width="11.2" height="7" fill="#fff"/><rect x="3.4" y="10.6" width="11.2" height="1.6" fill="#e02838"/><rect x="3.4" y="13.6" width="11.2" height="1.4" fill="#e02838"/></svg>
<svg class="abs" style="left:88px;top:877px" width="16" height="16" viewBox="0 0 18 18"><g fill="#48d028" stroke="#187a10" stroke-width=".6"><ellipse cx="9" cy="3.6" rx="2.5" ry="3.2"/><ellipse cx="9" cy="14.4" rx="2.5" ry="3.2"/><ellipse cx="3.6" cy="9" rx="3.2" ry="2.5"/><ellipse cx="14.4" cy="9" rx="3.2" ry="2.5"/><ellipse cx="5.2" cy="5.2" rx="2.4" ry="3" transform="rotate(-45 5.2 5.2)"/><ellipse cx="12.8" cy="12.8" rx="2.4" ry="3" transform="rotate(-45 12.8 12.8)"/><ellipse cx="12.8" cy="5.2" rx="2.4" ry="3" transform="rotate(45 12.8 5.2)"/></g><ellipse cx="5.2" cy="12.8" rx="2.4" ry="3" transform="rotate(45 5.2 12.8)" fill="#e83028" stroke="#8a1010" stroke-width=".6"/><circle cx="9" cy="9" r="2.3" fill="#f8e030" stroke="#8a7a10" stroke-width=".5"/></svg>
<svg class="abs" style="left:110px;top:876px" width="18" height="18" viewBox="0 0 18 18"><circle cx="9" cy="9" r="7.6" fill="#3058c8"/><circle cx="8" cy="7.4" r="3.6" fill="#7aa8f0"/><path d="M2 6 C1 12 5 17 10 17 C15 17 18 12 16.4 6.4 C16 8 15 9 14 9 C14.6 6 12.4 3.6 10.4 3 C11.4 4.6 10.6 6 9.4 6.6 C8 7.4 7.4 8.6 8.4 10 C6.4 10 5.4 8 6 6 C4.4 7 4 9 4.6 11 C3 9.6 2.4 8 2 6Z" fill="#f08020"/><path d="M3 12 C5 16 10 17 14 15 C11 16 6 15 3 12Z" fill="#f8c030"/></svg>
<div class="abs" style="left:143px;top:870px;font-size:13px;font-weight:bold;color:#fff;letter-spacing:-1.5px">»</div>
<div class="abs" style="left:163px;top:873px;width:156px;height:24px;border:1px solid #5c6068;border-radius:3px;background:linear-gradient(#44484e,#2c2f34 46%,#060708 50%,#0a0b0d);box-shadow:0 0 0 1px rgba(0,0,0,.75)"></div>
<svg class="abs" style="left:170px;top:876px" width="17" height="17" viewBox="0 0 18 18"><circle cx="9" cy="9" r="7.6" fill="#3058c8"/><circle cx="8" cy="7.4" r="3.6" fill="#7aa8f0"/><path d="M2 6 C1 12 5 17 10 17 C15 17 18 12 16.4 6.4 C16 8 15 9 14 9 C14.6 6 12.4 3.6 10.4 3 C11.4 4.6 10.6 6 9.4 6.6 C8 7.4 7.4 8.6 8.4 10 C6.4 10 5.4 8 6 6 C4.4 7 4 9 4.6 11 C3 9.6 2.4 8 2 6Z" fill="#f08020"/><path d="M3 12 C5 16 10 17 14 15 C11 16 6 15 3 12Z" fill="#f8c030"/></svg>
<div class="abs" style="left:190px;top:878px;font-size:12px;color:#fff;white-space:nowrap;letter-spacing:-0.32px">Externe Referenzen i...</div>
<div class="abs" style="left:322px;top:873px;width:156px;height:24px;border:1px solid #5c6068;border-radius:3px;background:linear-gradient(#44484e,#2c2f34 46%,#060708 50%,#0a0b0d);box-shadow:0 0 0 1px rgba(0,0,0,.75)"></div>
<svg class="abs" style="left:329px;top:876px" width="17" height="17" viewBox="0 0 18 18"><g fill="#48d028" stroke="#187a10" stroke-width=".6"><ellipse cx="9" cy="3.6" rx="2.5" ry="3.2"/><ellipse cx="9" cy="14.4" rx="2.5" ry="3.2"/><ellipse cx="3.6" cy="9" rx="3.2" ry="2.5"/><ellipse cx="14.4" cy="9" rx="3.2" ry="2.5"/><ellipse cx="5.2" cy="5.2" rx="2.4" ry="3" transform="rotate(-45 5.2 5.2)"/><ellipse cx="12.8" cy="12.8" rx="2.4" ry="3" transform="rotate(-45 12.8 12.8)"/><ellipse cx="12.8" cy="5.2" rx="2.4" ry="3" transform="rotate(45 12.8 5.2)"/></g><ellipse cx="5.2" cy="12.8" rx="2.4" ry="3" transform="rotate(45 5.2 12.8)" fill="#e83028" stroke="#8a1010" stroke-width=".6"/><circle cx="9" cy="9" r="2.3" fill="#f8e030" stroke="#8a7a10" stroke-width=".5"/></svg>
<div class="abs" style="left:349px;top:878px;font-size:12px;color:#fff;white-space:nowrap;letter-spacing:0px">ICQ</div>
<div class="abs" style="left:483px;top:873px;width:156px;height:24px;border:1px solid #5c6068;border-radius:3px;background:linear-gradient(#44484e,#2c2f34 46%,#060708 50%,#0a0b0d);box-shadow:0 0 0 1px rgba(0,0,0,.75)"></div>
<svg class="abs" style="left:490px;top:876px" width="17" height="17" viewBox="0 0 18 18"><rect x="1" y="1" width="16" height="16" rx="1.4" fill="#2848d0" stroke="#e8ecff" stroke-width="1"/><rect x="4" y="1.6" width="9" height="5.6" fill="#f4f6ff"/><rect x="9.6" y="2.4" width="2.2" height="4" fill="#2848d0"/><rect x="3.4" y="9.4" width="11.2" height="7" fill="#fff"/><rect x="3.4" y="10.6" width="11.2" height="1.6" fill="#e02838"/><rect x="3.4" y="13.6" width="11.2" height="1.4" fill="#e02838"/></svg>
<div class="abs" style="left:510px;top:878px;font-size:12px;color:#fff;white-space:nowrap;letter-spacing:-0.03px">Total Commander 7...</div>
<div class="abs" style="left:642px;top:873px;width:156px;height:24px;border:1px solid #8a8e96;border-radius:3px;background:linear-gradient(#6a6e76,#4c5058 46%,#1e2024 50%,#24262b);box-shadow:0 0 0 1px rgba(0,0,0,.75)"></div>
<svg class="abs" style="left:649px;top:876px" width="17" height="17" viewBox="0 0 18 18"><path d="M2 5 L10 1.5 L17 4 V14 L9 17.5 L2 15Z" fill="#d82a22" stroke="#7a100c" stroke-width=".7"/><path d="M2 5 L9 7.6 L17 4 L10 1.5Z" fill="#f07a70"/><text x="9" y="14.6" font-family="Liberation Sans,sans-serif" font-weight="bold" font-size="8.6" fill="#fff" text-anchor="middle" letter-spacing="-0.4">SW</text></svg>
<div class="abs" style="left:669px;top:878px;font-size:12px;color:#fff;white-space:nowrap;letter-spacing:-0.05px">SolidWorks Premiu...</div>
<div class="abs" style="left:1179px;top:877px;font-size:12px;color:#fff;letter-spacing:-0.2px">DE</div>
<svg class="abs" style="left:1208px;top:878px" width="10" height="12" viewBox="0 0 10 12"><path d="M7.6 1.6 L3 6 L7.6 10.4" fill="none" stroke="#fff" stroke-width="2.2"/></svg>
<svg class="abs" style="left:1223px;top:877px" width="16" height="16" viewBox="0 0 18 18"><g fill="#48d028" stroke="#187a10" stroke-width=".6"><ellipse cx="9" cy="3.6" rx="2.5" ry="3.2"/><ellipse cx="9" cy="14.4" rx="2.5" ry="3.2"/><ellipse cx="3.6" cy="9" rx="3.2" ry="2.5"/><ellipse cx="14.4" cy="9" rx="3.2" ry="2.5"/><ellipse cx="5.2" cy="5.2" rx="2.4" ry="3" transform="rotate(-45 5.2 5.2)"/><ellipse cx="12.8" cy="12.8" rx="2.4" ry="3" transform="rotate(-45 12.8 12.8)"/><ellipse cx="12.8" cy="5.2" rx="2.4" ry="3" transform="rotate(45 12.8 5.2)"/></g><ellipse cx="5.2" cy="12.8" rx="2.4" ry="3" transform="rotate(45 5.2 12.8)" fill="#48d028" stroke="#187a10" stroke-width=".6"/><circle cx="9" cy="9" r="2.3" fill="#f8e030" stroke="#8a7a10" stroke-width=".5"/></svg>
<svg class="abs" style="left:1241px;top:877px" width="16" height="16" viewBox="0 0 18 18"><rect x="5" y="2" width="10" height="13" fill="#5aa0e0" stroke="#c8e0f8" stroke-width=".8"/><ellipse cx="8" cy="9" rx="7" ry="3.4" fill="none" stroke="#e8b030" stroke-width="1.4"/><rect x="7" y="5" width="5" height="4" fill="#d8ecff"/></svg>
<svg class="abs" style="left:1260px;top:877px" width="16" height="16" viewBox="0 0 18 18"><rect x="1" y="1" width="16" height="16" fill="#b01018"/><path d="M3 14 C6 10 8 6 8 3 C9 7 12 10 15 11 C11 10 6 12 3 14Z" fill="none" stroke="#fff" stroke-width="1.3"/><circle cx="13.4" cy="4.4" r="2.2" fill="#e83838" stroke="#fff" stroke-width=".7"/></svg>
<svg class="abs" style="left:1277px;top:876px" width="17" height="18" viewBox="0 0 18 19"><rect x=".5" y=".5" width="17" height="18" fill="#d82028"/><path d="M3 12 C4 6 8 3 11 4 C14 5 15.4 8 15 11 M9 8 C9.6 11 11 14 13 16" fill="none" stroke="#fff" stroke-width="1.8" stroke-linecap="round"/></svg>
<svg class="abs" style="left:1295px;top:876px" width="17" height="18" viewBox="0 0 18 19"><rect x="2" y="1" width="15" height="12" fill="#8a8c8e" stroke="#c8c8c8" stroke-width=".8"/><rect x="1" y="15" width="5" height="2.4" fill="#d8d8d8"/><rect x="9" y="15" width="8" height="2.4" fill="#d8d8d8"/></svg>
<div class="abs" style="left:1313px;top:878px;width:17px;height:14px;background:#e01818;color:#fff;font-size:9px;font-weight:bold;line-height:15px;text-align:center;letter-spacing:-0.4px">ATi</div>
<svg class="abs" style="left:1341px;top:875px" width="16" height="18" viewBox="0 0 18 20"><rect x="6" y="5" width="9" height="13" rx="1" fill="#d8f0d0" stroke="#fff" stroke-width="1"/><rect x="8.4" y="3" width="4.2" height="2.4" fill="#fff"/><path d="M2 2 V6 M5 2 V6 M1 6 H6 V9 H1Z M3.5 9 V14 H6" stroke="#fff" stroke-width="1.2" fill="#e8e8e8"/></svg>
<svg class="abs" style="left:1360px;top:876px" width="17" height="18" viewBox="0 0 18 19"><rect x="5" y="1" width="11" height="8" fill="#3a7ad8" stroke="#e8f0ff" stroke-width="1"/><rect x="1" y="5" width="11" height="8" fill="#3a7ad8" stroke="#e8f0ff" stroke-width="1"/><path d="M4 15.6 H9" stroke="#e8f0ff" stroke-width="1.4"/><circle cx="12.4" cy="14" r="4" fill="#2a9a4a" stroke="#8ad0f0" stroke-width=".8"/></svg>
<svg class="abs" style="left:1378px;top:877px" width="14" height="16" viewBox="0 0 16 18"><path d="M1 6 H4 L8.4 1.6 V16.4 L4 12 H1Z" fill="#f4f4f4" stroke="#fff" stroke-width=".5"/><path d="M11 5.4 C12.6 7.6 12.6 10.4 11 12.6" fill="none" stroke="#48d048" stroke-width="1.3"/></svg>
<div class="abs" style="left:1399px;top:878px;font-size:12px;color:#fff;letter-spacing:-0.3px">14:45</div>
<!--/TASKBAR-->
</div></body></html>
